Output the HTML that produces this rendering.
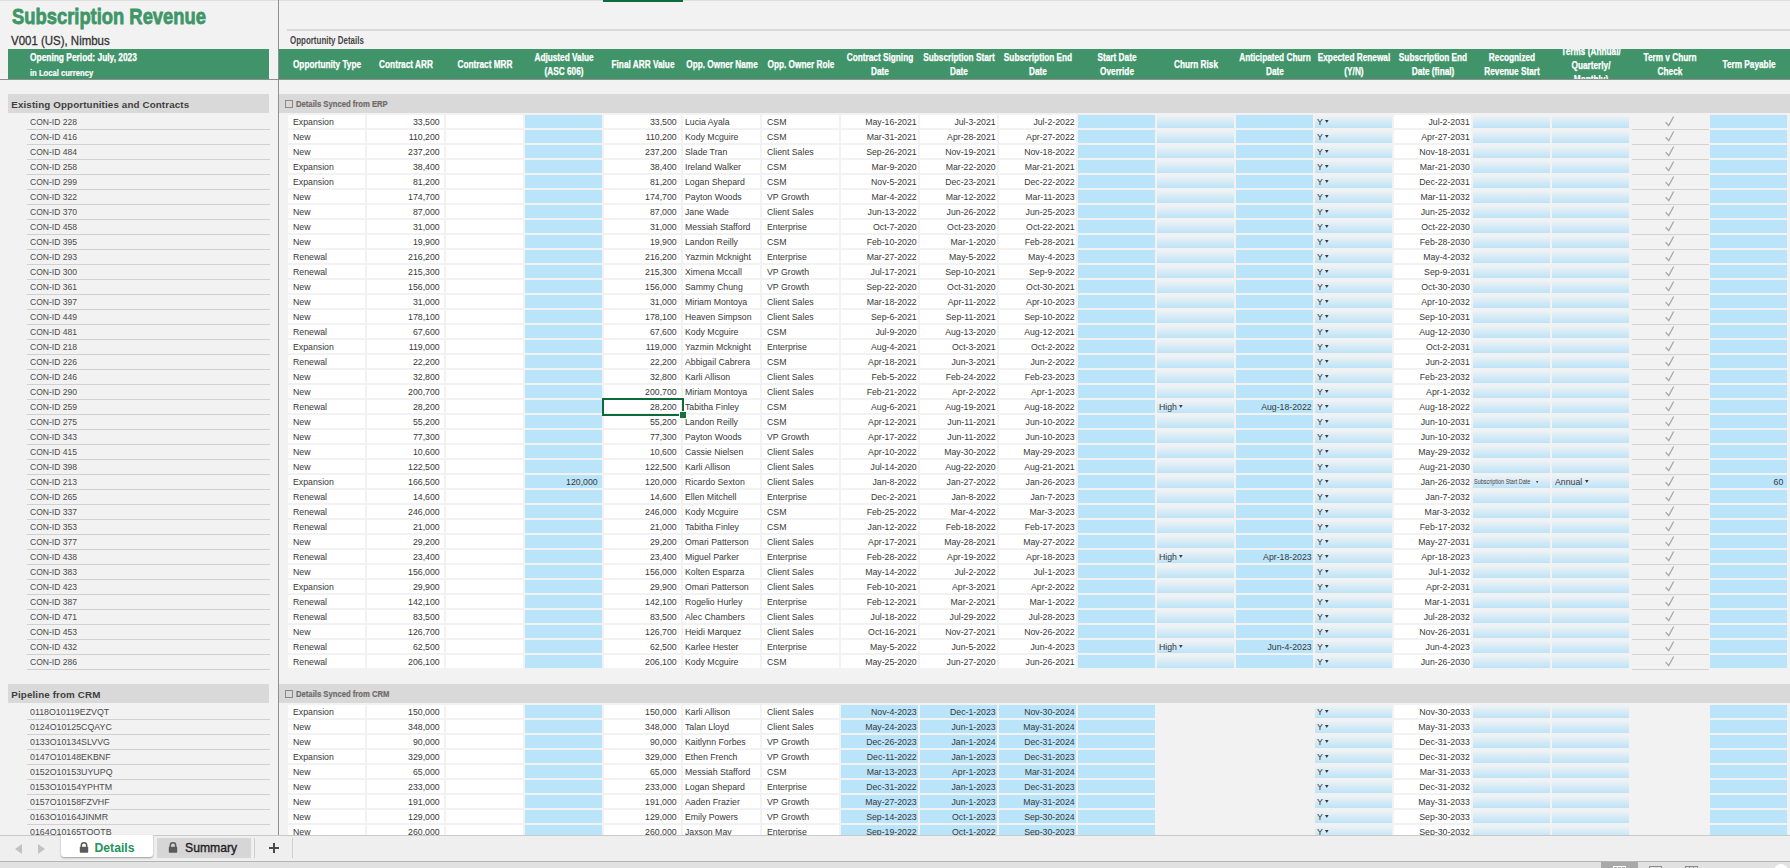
<!DOCTYPE html><html><head><meta charset="utf-8"><title>Subscription Revenue</title><style>
*{margin:0;padding:0;box-sizing:border-box}
html,body{width:1790px;height:868px;overflow:hidden;background:#f2f2f2;position:relative;font-family:"Liberation Sans",sans-serif}
.r{position:absolute}
.t{position:absolute;font-size:9.5px;line-height:13px;height:13px;color:#383838;white-space:nowrap;transform:scaleX(.92);transform-origin:0 0}
.t.rt{text-align:right;transform-origin:100% 0}
.lid{position:absolute;font-size:9.5px;line-height:13px;color:#4a4a4a;white-space:nowrap;transform:scaleX(.9);transform-origin:0 0}
.hd{position:absolute;color:#fff;font-weight:bold;font-size:10.2px;line-height:14px;-webkit-text-stroke:.25px #fff;white-space:nowrap;text-align:center;width:120px;transform:scaleX(.81);transform-origin:50% 0}
.arr{position:absolute;width:0;height:0;border-left:1.5px solid transparent;border-right:1.5px solid transparent;border-top:2.6px solid #333}
</style></head><body>
<div class="r" style="left:0.00px;top:0.00px;width:1790.00px;height:1.00px;background:#dedede;"></div>
<div class="r" style="left:603.00px;top:0.00px;width:80.00px;height:1.50px;background:#0e6a3a;"></div>
<div class="r" style="left:11.8px;top:1.6px;font-size:22px;line-height:30px;font-weight:bold;color:#3f9667;-webkit-text-stroke:.8px #3f9667;white-space:nowrap;transform:scaleX(.835);transform-origin:0 0">Subscription Revenue</div>
<div class="r" style="left:10.8px;top:32.8px;font-size:12.6px;line-height:16px;color:#333;-webkit-text-stroke:.3px #333;white-space:nowrap;transform:scaleX(.91);transform-origin:0 0">V001 (US), Nimbus</div>
<div class="r" style="left:8.00px;top:49.00px;width:261.00px;height:30.00px;background:#41946a;"></div>
<div class="r" style="left:30px;top:50.5px;font-size:10.1px;line-height:13px;font-weight:bold;color:#fff;-webkit-text-stroke:.25px #fff;white-space:nowrap;transform:scaleX(.83);transform-origin:0 0">Opening Period: July, 2023</div>
<div class="r" style="left:30px;top:66.5px;font-size:9.3px;line-height:13px;font-weight:bold;color:#fff;-webkit-text-stroke:.2px #fff;white-space:nowrap;transform:scaleX(.82);transform-origin:0 0">in Local currency</div>
<div class="r" style="left:287.00px;top:29.20px;width:1503.00px;height:1.80px;background:#d9d9d9;"></div>
<div class="r" style="left:290px;top:33.6px;font-size:10.5px;line-height:13px;font-weight:bold;color:#454545;white-space:nowrap;transform:scaleX(.758);transform-origin:0 0">Opportunity Details</div>
<div class="r" style="left:279.00px;top:49.00px;width:1511.00px;height:30.00px;background:#41946a;"></div>
<div class="hd" style="left:266.50px;top:57.5px">Opportunity Type</div>
<div class="hd" style="left:345.50px;top:57.5px">Contract ARR</div>
<div class="hd" style="left:424.50px;top:57.5px">Contract MRR</div>
<div class="hd" style="left:503.50px;top:50.5px">Adjusted Value<br>(ASC 606)</div>
<div class="hd" style="left:582.50px;top:57.5px">Final ARR Value</div>
<div class="hd" style="left:661.50px;top:57.5px">Opp. Owner Name</div>
<div class="hd" style="left:740.50px;top:57.5px">Opp. Owner Role</div>
<div class="hd" style="left:819.50px;top:50.5px">Contract Signing<br>Date</div>
<div class="hd" style="left:898.50px;top:50.5px">Subscription Start<br>Date</div>
<div class="hd" style="left:977.50px;top:50.5px">Subscription End<br>Date</div>
<div class="hd" style="left:1056.50px;top:50.5px">Start Date<br>Override</div>
<div class="hd" style="left:1135.50px;top:57.5px">Churn Risk</div>
<div class="hd" style="left:1214.50px;top:50.5px">Anticipated Churn<br>Date</div>
<div class="hd" style="left:1293.50px;top:50.5px">Expected Renewal<br>(Y/N)</div>
<div class="hd" style="left:1372.50px;top:50.5px">Subscription End<br>Date (final)</div>
<div class="hd" style="left:1451.50px;top:50.5px">Recognized<br>Revenue Start</div>
<div class="r" style="left:1552.00px;top:49px;width:77.0px;height:30px;overflow:hidden"><div class="hd" style="left:-21.50px;top:-4.5px;line-height:14px">Terms (Annual/<br>Quarterly/<br>Monthly)</div></div>
<div class="hd" style="left:1609.50px;top:50.5px">Term v Churn<br>Check</div>
<div class="hd" style="left:1688.50px;top:57.5px">Term Payable</div>
<div class="r" style="left:0.00px;top:79.00px;width:1790.00px;height:1.00px;background:#8f8f8f;"></div>
<div class="r" style="left:278.00px;top:0.00px;width:1.00px;height:835.00px;background:#8f8f8f;"></div>
<div class="r" style="left:8.00px;top:94.00px;width:261.00px;height:19.00px;background:#d9d9d9;"></div>
<div class="r" style="left:279.00px;top:94.00px;width:1511.00px;height:19.00px;background:#d9d9d9;"></div>
<div class="r" style="left:11.3px;top:98px;font-size:9.8px;line-height:13px;font-weight:bold;color:#3f3f3f;white-space:nowrap;letter-spacing:.12px">Existing Opportunities and Contracts</div>
<div class="r" style="left:285px;top:100px;width:8px;height:8px;border:1px solid #8a8a8a"></div>
<div class="r" style="left:296.3px;top:97.1px;font-size:9.6px;line-height:13px;font-weight:bold;color:#6f6b68;-webkit-text-stroke:.2px #6f6b68;white-space:nowrap;transform:scaleX(.8);transform-origin:0 0">Details Synced from ERP</div>
<div class="lid" style="left:30px;top:115px">CON-ID 228</div>
<div class="r" style="left:27.00px;top:129.00px;width:242.50px;height:1.00px;background:#d0d0d0;"></div>
<div class="r" style="left:288.00px;top:115px;width:77.0px;height:13.0px;background:#ffffff"></div>
<div class="r" style="left:367.00px;top:115px;width:77.0px;height:13.0px;background:#ffffff"></div>
<div class="r" style="left:446.00px;top:115px;width:77.0px;height:13.0px;background:#ffffff"></div>
<div class="r" style="left:604.00px;top:115px;width:77.0px;height:13.0px;background:#ffffff"></div>
<div class="r" style="left:683.00px;top:115px;width:77.0px;height:13.0px;background:#ffffff"></div>
<div class="r" style="left:762.00px;top:115px;width:77.0px;height:13.0px;background:#ffffff"></div>
<div class="r" style="left:841.00px;top:115px;width:77.0px;height:13.0px;background:#ffffff"></div>
<div class="r" style="left:920.00px;top:115px;width:77.0px;height:13.0px;background:#ffffff"></div>
<div class="r" style="left:999.00px;top:115px;width:77.0px;height:13.0px;background:#ffffff"></div>
<div class="r" style="left:1394.00px;top:115px;width:77.0px;height:13.0px;background:#ffffff"></div>
<div class="r" style="left:525.00px;top:115px;width:77.0px;height:13.0px;background:#b9e4fa"></div>
<div class="r" style="left:1078.00px;top:115px;width:77.0px;height:13.0px;background:#b9e4fa"></div>
<div class="r" style="left:1236.00px;top:115px;width:77.0px;height:13.0px;background:#b9e4fa"></div>
<div class="r" style="left:1710.00px;top:115px;width:77.0px;height:13.0px;background:#b9e4fa"></div>
<div class="r" style="left:1157.00px;top:115px;width:77.0px;height:13.0px;background:linear-gradient(#f1f3f4,#bde3f8)"></div>
<div class="r" style="left:1315.00px;top:115px;width:77.0px;height:13.0px;background:linear-gradient(#f1f3f4,#bde3f8)"></div>
<div class="r" style="left:1473.00px;top:115px;width:77.0px;height:13.0px;background:linear-gradient(#f1f3f4,#bde3f8)"></div>
<div class="r" style="left:1552.00px;top:115px;width:77.0px;height:13.0px;background:linear-gradient(#f1f3f4,#bde3f8)"></div>
<div class="t" style="left:293.00px;top:115px">Expansion</div>
<div class="t rt" style="left:367.00px;top:115px;width:72.70px">33,500</div>
<div class="t rt" style="left:604.00px;top:115px;width:72.70px">33,500</div>
<div class="t" style="left:684.80px;top:115px">Lucia Ayala</div>
<div class="t" style="left:767.00px;top:115px">CSM</div>
<div class="t rt" style="left:841.00px;top:115px;width:75.70px">May-16-2021</div>
<div class="t rt" style="left:920.00px;top:115px;width:75.70px">Jul-3-2021</div>
<div class="t rt" style="left:999.00px;top:115px;width:75.70px">Jul-2-2022</div>
<div class="t" style="left:1317.40px;top:115px">Y</div>
<svg class="r" style="left:1325.40px;top:120.30px" width="4" height="3" viewBox="0 0 4 3"><polygon points="0,0 3.6,0 1.8,3" fill="#3a3a3a"/></svg>
<div class="t rt" style="left:1394.00px;top:115px;width:75.80px">Jul-2-2031</div>
<svg class="r" style="left:1664.35px;top:115.5px" width="12" height="12" viewBox="0 0 12 12"><path d="M1.65 6.3 L4.75 9.6 L9.65 0.5" fill="none" stroke="#a9a9a9" stroke-width="1.3"/></svg>
<div class="r" style="left:1631.50px;top:129px;width:77.00px;height:1px;background:#d2d2d2"></div>
<div class="lid" style="left:30px;top:130px">CON-ID 416</div>
<div class="r" style="left:27.00px;top:144.00px;width:242.50px;height:1.00px;background:#d0d0d0;"></div>
<div class="r" style="left:288.00px;top:130px;width:77.0px;height:13.0px;background:#ffffff"></div>
<div class="r" style="left:367.00px;top:130px;width:77.0px;height:13.0px;background:#ffffff"></div>
<div class="r" style="left:446.00px;top:130px;width:77.0px;height:13.0px;background:#ffffff"></div>
<div class="r" style="left:604.00px;top:130px;width:77.0px;height:13.0px;background:#ffffff"></div>
<div class="r" style="left:683.00px;top:130px;width:77.0px;height:13.0px;background:#ffffff"></div>
<div class="r" style="left:762.00px;top:130px;width:77.0px;height:13.0px;background:#ffffff"></div>
<div class="r" style="left:841.00px;top:130px;width:77.0px;height:13.0px;background:#ffffff"></div>
<div class="r" style="left:920.00px;top:130px;width:77.0px;height:13.0px;background:#ffffff"></div>
<div class="r" style="left:999.00px;top:130px;width:77.0px;height:13.0px;background:#ffffff"></div>
<div class="r" style="left:1394.00px;top:130px;width:77.0px;height:13.0px;background:#ffffff"></div>
<div class="r" style="left:525.00px;top:130px;width:77.0px;height:13.0px;background:#b9e4fa"></div>
<div class="r" style="left:1078.00px;top:130px;width:77.0px;height:13.0px;background:#b9e4fa"></div>
<div class="r" style="left:1236.00px;top:130px;width:77.0px;height:13.0px;background:#b9e4fa"></div>
<div class="r" style="left:1710.00px;top:130px;width:77.0px;height:13.0px;background:#b9e4fa"></div>
<div class="r" style="left:1157.00px;top:130px;width:77.0px;height:13.0px;background:linear-gradient(#f1f3f4,#bde3f8)"></div>
<div class="r" style="left:1315.00px;top:130px;width:77.0px;height:13.0px;background:linear-gradient(#f1f3f4,#bde3f8)"></div>
<div class="r" style="left:1473.00px;top:130px;width:77.0px;height:13.0px;background:linear-gradient(#f1f3f4,#bde3f8)"></div>
<div class="r" style="left:1552.00px;top:130px;width:77.0px;height:13.0px;background:linear-gradient(#f1f3f4,#bde3f8)"></div>
<div class="t" style="left:293.00px;top:130px">New</div>
<div class="t rt" style="left:367.00px;top:130px;width:72.70px">110,200</div>
<div class="t rt" style="left:604.00px;top:130px;width:72.70px">110,200</div>
<div class="t" style="left:684.80px;top:130px">Kody Mcguire</div>
<div class="t" style="left:767.00px;top:130px">CSM</div>
<div class="t rt" style="left:841.00px;top:130px;width:75.70px">Mar-31-2021</div>
<div class="t rt" style="left:920.00px;top:130px;width:75.70px">Apr-28-2021</div>
<div class="t rt" style="left:999.00px;top:130px;width:75.70px">Apr-27-2022</div>
<div class="t" style="left:1317.40px;top:130px">Y</div>
<svg class="r" style="left:1325.40px;top:135.30px" width="4" height="3" viewBox="0 0 4 3"><polygon points="0,0 3.6,0 1.8,3" fill="#3a3a3a"/></svg>
<div class="t rt" style="left:1394.00px;top:130px;width:75.80px">Apr-27-2031</div>
<svg class="r" style="left:1664.35px;top:130.5px" width="12" height="12" viewBox="0 0 12 12"><path d="M1.65 6.3 L4.75 9.6 L9.65 0.5" fill="none" stroke="#a9a9a9" stroke-width="1.3"/></svg>
<div class="r" style="left:1631.50px;top:144px;width:77.00px;height:1px;background:#d2d2d2"></div>
<div class="lid" style="left:30px;top:145px">CON-ID 484</div>
<div class="r" style="left:27.00px;top:159.00px;width:242.50px;height:1.00px;background:#d0d0d0;"></div>
<div class="r" style="left:288.00px;top:145px;width:77.0px;height:13.0px;background:#ffffff"></div>
<div class="r" style="left:367.00px;top:145px;width:77.0px;height:13.0px;background:#ffffff"></div>
<div class="r" style="left:446.00px;top:145px;width:77.0px;height:13.0px;background:#ffffff"></div>
<div class="r" style="left:604.00px;top:145px;width:77.0px;height:13.0px;background:#ffffff"></div>
<div class="r" style="left:683.00px;top:145px;width:77.0px;height:13.0px;background:#ffffff"></div>
<div class="r" style="left:762.00px;top:145px;width:77.0px;height:13.0px;background:#ffffff"></div>
<div class="r" style="left:841.00px;top:145px;width:77.0px;height:13.0px;background:#ffffff"></div>
<div class="r" style="left:920.00px;top:145px;width:77.0px;height:13.0px;background:#ffffff"></div>
<div class="r" style="left:999.00px;top:145px;width:77.0px;height:13.0px;background:#ffffff"></div>
<div class="r" style="left:1394.00px;top:145px;width:77.0px;height:13.0px;background:#ffffff"></div>
<div class="r" style="left:525.00px;top:145px;width:77.0px;height:13.0px;background:#b9e4fa"></div>
<div class="r" style="left:1078.00px;top:145px;width:77.0px;height:13.0px;background:#b9e4fa"></div>
<div class="r" style="left:1236.00px;top:145px;width:77.0px;height:13.0px;background:#b9e4fa"></div>
<div class="r" style="left:1710.00px;top:145px;width:77.0px;height:13.0px;background:#b9e4fa"></div>
<div class="r" style="left:1157.00px;top:145px;width:77.0px;height:13.0px;background:linear-gradient(#f1f3f4,#bde3f8)"></div>
<div class="r" style="left:1315.00px;top:145px;width:77.0px;height:13.0px;background:linear-gradient(#f1f3f4,#bde3f8)"></div>
<div class="r" style="left:1473.00px;top:145px;width:77.0px;height:13.0px;background:linear-gradient(#f1f3f4,#bde3f8)"></div>
<div class="r" style="left:1552.00px;top:145px;width:77.0px;height:13.0px;background:linear-gradient(#f1f3f4,#bde3f8)"></div>
<div class="t" style="left:293.00px;top:145px">New</div>
<div class="t rt" style="left:367.00px;top:145px;width:72.70px">237,200</div>
<div class="t rt" style="left:604.00px;top:145px;width:72.70px">237,200</div>
<div class="t" style="left:684.80px;top:145px">Slade Tran</div>
<div class="t" style="left:767.00px;top:145px">Client Sales</div>
<div class="t rt" style="left:841.00px;top:145px;width:75.70px">Sep-26-2021</div>
<div class="t rt" style="left:920.00px;top:145px;width:75.70px">Nov-19-2021</div>
<div class="t rt" style="left:999.00px;top:145px;width:75.70px">Nov-18-2022</div>
<div class="t" style="left:1317.40px;top:145px">Y</div>
<svg class="r" style="left:1325.40px;top:150.30px" width="4" height="3" viewBox="0 0 4 3"><polygon points="0,0 3.6,0 1.8,3" fill="#3a3a3a"/></svg>
<div class="t rt" style="left:1394.00px;top:145px;width:75.80px">Nov-18-2031</div>
<svg class="r" style="left:1664.35px;top:145.5px" width="12" height="12" viewBox="0 0 12 12"><path d="M1.65 6.3 L4.75 9.6 L9.65 0.5" fill="none" stroke="#a9a9a9" stroke-width="1.3"/></svg>
<div class="r" style="left:1631.50px;top:159px;width:77.00px;height:1px;background:#d2d2d2"></div>
<div class="lid" style="left:30px;top:160px">CON-ID 258</div>
<div class="r" style="left:27.00px;top:174.00px;width:242.50px;height:1.00px;background:#d0d0d0;"></div>
<div class="r" style="left:288.00px;top:160px;width:77.0px;height:13.0px;background:#ffffff"></div>
<div class="r" style="left:367.00px;top:160px;width:77.0px;height:13.0px;background:#ffffff"></div>
<div class="r" style="left:446.00px;top:160px;width:77.0px;height:13.0px;background:#ffffff"></div>
<div class="r" style="left:604.00px;top:160px;width:77.0px;height:13.0px;background:#ffffff"></div>
<div class="r" style="left:683.00px;top:160px;width:77.0px;height:13.0px;background:#ffffff"></div>
<div class="r" style="left:762.00px;top:160px;width:77.0px;height:13.0px;background:#ffffff"></div>
<div class="r" style="left:841.00px;top:160px;width:77.0px;height:13.0px;background:#ffffff"></div>
<div class="r" style="left:920.00px;top:160px;width:77.0px;height:13.0px;background:#ffffff"></div>
<div class="r" style="left:999.00px;top:160px;width:77.0px;height:13.0px;background:#ffffff"></div>
<div class="r" style="left:1394.00px;top:160px;width:77.0px;height:13.0px;background:#ffffff"></div>
<div class="r" style="left:525.00px;top:160px;width:77.0px;height:13.0px;background:#b9e4fa"></div>
<div class="r" style="left:1078.00px;top:160px;width:77.0px;height:13.0px;background:#b9e4fa"></div>
<div class="r" style="left:1236.00px;top:160px;width:77.0px;height:13.0px;background:#b9e4fa"></div>
<div class="r" style="left:1710.00px;top:160px;width:77.0px;height:13.0px;background:#b9e4fa"></div>
<div class="r" style="left:1157.00px;top:160px;width:77.0px;height:13.0px;background:linear-gradient(#f1f3f4,#bde3f8)"></div>
<div class="r" style="left:1315.00px;top:160px;width:77.0px;height:13.0px;background:linear-gradient(#f1f3f4,#bde3f8)"></div>
<div class="r" style="left:1473.00px;top:160px;width:77.0px;height:13.0px;background:linear-gradient(#f1f3f4,#bde3f8)"></div>
<div class="r" style="left:1552.00px;top:160px;width:77.0px;height:13.0px;background:linear-gradient(#f1f3f4,#bde3f8)"></div>
<div class="t" style="left:293.00px;top:160px">Expansion</div>
<div class="t rt" style="left:367.00px;top:160px;width:72.70px">38,400</div>
<div class="t rt" style="left:604.00px;top:160px;width:72.70px">38,400</div>
<div class="t" style="left:684.80px;top:160px">Ireland Walker</div>
<div class="t" style="left:767.00px;top:160px">CSM</div>
<div class="t rt" style="left:841.00px;top:160px;width:75.70px">Mar-9-2020</div>
<div class="t rt" style="left:920.00px;top:160px;width:75.70px">Mar-22-2020</div>
<div class="t rt" style="left:999.00px;top:160px;width:75.70px">Mar-21-2021</div>
<div class="t" style="left:1317.40px;top:160px">Y</div>
<svg class="r" style="left:1325.40px;top:165.30px" width="4" height="3" viewBox="0 0 4 3"><polygon points="0,0 3.6,0 1.8,3" fill="#3a3a3a"/></svg>
<div class="t rt" style="left:1394.00px;top:160px;width:75.80px">Mar-21-2030</div>
<svg class="r" style="left:1664.35px;top:160.5px" width="12" height="12" viewBox="0 0 12 12"><path d="M1.65 6.3 L4.75 9.6 L9.65 0.5" fill="none" stroke="#a9a9a9" stroke-width="1.3"/></svg>
<div class="r" style="left:1631.50px;top:174px;width:77.00px;height:1px;background:#d2d2d2"></div>
<div class="lid" style="left:30px;top:175px">CON-ID 299</div>
<div class="r" style="left:27.00px;top:189.00px;width:242.50px;height:1.00px;background:#d0d0d0;"></div>
<div class="r" style="left:288.00px;top:175px;width:77.0px;height:13.0px;background:#ffffff"></div>
<div class="r" style="left:367.00px;top:175px;width:77.0px;height:13.0px;background:#ffffff"></div>
<div class="r" style="left:446.00px;top:175px;width:77.0px;height:13.0px;background:#ffffff"></div>
<div class="r" style="left:604.00px;top:175px;width:77.0px;height:13.0px;background:#ffffff"></div>
<div class="r" style="left:683.00px;top:175px;width:77.0px;height:13.0px;background:#ffffff"></div>
<div class="r" style="left:762.00px;top:175px;width:77.0px;height:13.0px;background:#ffffff"></div>
<div class="r" style="left:841.00px;top:175px;width:77.0px;height:13.0px;background:#ffffff"></div>
<div class="r" style="left:920.00px;top:175px;width:77.0px;height:13.0px;background:#ffffff"></div>
<div class="r" style="left:999.00px;top:175px;width:77.0px;height:13.0px;background:#ffffff"></div>
<div class="r" style="left:1394.00px;top:175px;width:77.0px;height:13.0px;background:#ffffff"></div>
<div class="r" style="left:525.00px;top:175px;width:77.0px;height:13.0px;background:#b9e4fa"></div>
<div class="r" style="left:1078.00px;top:175px;width:77.0px;height:13.0px;background:#b9e4fa"></div>
<div class="r" style="left:1236.00px;top:175px;width:77.0px;height:13.0px;background:#b9e4fa"></div>
<div class="r" style="left:1710.00px;top:175px;width:77.0px;height:13.0px;background:#b9e4fa"></div>
<div class="r" style="left:1157.00px;top:175px;width:77.0px;height:13.0px;background:linear-gradient(#f1f3f4,#bde3f8)"></div>
<div class="r" style="left:1315.00px;top:175px;width:77.0px;height:13.0px;background:linear-gradient(#f1f3f4,#bde3f8)"></div>
<div class="r" style="left:1473.00px;top:175px;width:77.0px;height:13.0px;background:linear-gradient(#f1f3f4,#bde3f8)"></div>
<div class="r" style="left:1552.00px;top:175px;width:77.0px;height:13.0px;background:linear-gradient(#f1f3f4,#bde3f8)"></div>
<div class="t" style="left:293.00px;top:175px">Expansion</div>
<div class="t rt" style="left:367.00px;top:175px;width:72.70px">81,200</div>
<div class="t rt" style="left:604.00px;top:175px;width:72.70px">81,200</div>
<div class="t" style="left:684.80px;top:175px">Logan Shepard</div>
<div class="t" style="left:767.00px;top:175px">CSM</div>
<div class="t rt" style="left:841.00px;top:175px;width:75.70px">Nov-5-2021</div>
<div class="t rt" style="left:920.00px;top:175px;width:75.70px">Dec-23-2021</div>
<div class="t rt" style="left:999.00px;top:175px;width:75.70px">Dec-22-2022</div>
<div class="t" style="left:1317.40px;top:175px">Y</div>
<svg class="r" style="left:1325.40px;top:180.30px" width="4" height="3" viewBox="0 0 4 3"><polygon points="0,0 3.6,0 1.8,3" fill="#3a3a3a"/></svg>
<div class="t rt" style="left:1394.00px;top:175px;width:75.80px">Dec-22-2031</div>
<svg class="r" style="left:1664.35px;top:175.5px" width="12" height="12" viewBox="0 0 12 12"><path d="M1.65 6.3 L4.75 9.6 L9.65 0.5" fill="none" stroke="#a9a9a9" stroke-width="1.3"/></svg>
<div class="r" style="left:1631.50px;top:189px;width:77.00px;height:1px;background:#d2d2d2"></div>
<div class="lid" style="left:30px;top:190px">CON-ID 322</div>
<div class="r" style="left:27.00px;top:204.00px;width:242.50px;height:1.00px;background:#d0d0d0;"></div>
<div class="r" style="left:288.00px;top:190px;width:77.0px;height:13.0px;background:#ffffff"></div>
<div class="r" style="left:367.00px;top:190px;width:77.0px;height:13.0px;background:#ffffff"></div>
<div class="r" style="left:446.00px;top:190px;width:77.0px;height:13.0px;background:#ffffff"></div>
<div class="r" style="left:604.00px;top:190px;width:77.0px;height:13.0px;background:#ffffff"></div>
<div class="r" style="left:683.00px;top:190px;width:77.0px;height:13.0px;background:#ffffff"></div>
<div class="r" style="left:762.00px;top:190px;width:77.0px;height:13.0px;background:#ffffff"></div>
<div class="r" style="left:841.00px;top:190px;width:77.0px;height:13.0px;background:#ffffff"></div>
<div class="r" style="left:920.00px;top:190px;width:77.0px;height:13.0px;background:#ffffff"></div>
<div class="r" style="left:999.00px;top:190px;width:77.0px;height:13.0px;background:#ffffff"></div>
<div class="r" style="left:1394.00px;top:190px;width:77.0px;height:13.0px;background:#ffffff"></div>
<div class="r" style="left:525.00px;top:190px;width:77.0px;height:13.0px;background:#b9e4fa"></div>
<div class="r" style="left:1078.00px;top:190px;width:77.0px;height:13.0px;background:#b9e4fa"></div>
<div class="r" style="left:1236.00px;top:190px;width:77.0px;height:13.0px;background:#b9e4fa"></div>
<div class="r" style="left:1710.00px;top:190px;width:77.0px;height:13.0px;background:#b9e4fa"></div>
<div class="r" style="left:1157.00px;top:190px;width:77.0px;height:13.0px;background:linear-gradient(#f1f3f4,#bde3f8)"></div>
<div class="r" style="left:1315.00px;top:190px;width:77.0px;height:13.0px;background:linear-gradient(#f1f3f4,#bde3f8)"></div>
<div class="r" style="left:1473.00px;top:190px;width:77.0px;height:13.0px;background:linear-gradient(#f1f3f4,#bde3f8)"></div>
<div class="r" style="left:1552.00px;top:190px;width:77.0px;height:13.0px;background:linear-gradient(#f1f3f4,#bde3f8)"></div>
<div class="t" style="left:293.00px;top:190px">New</div>
<div class="t rt" style="left:367.00px;top:190px;width:72.70px">174,700</div>
<div class="t rt" style="left:604.00px;top:190px;width:72.70px">174,700</div>
<div class="t" style="left:684.80px;top:190px">Payton Woods</div>
<div class="t" style="left:767.00px;top:190px">VP Growth</div>
<div class="t rt" style="left:841.00px;top:190px;width:75.70px">Mar-4-2022</div>
<div class="t rt" style="left:920.00px;top:190px;width:75.70px">Mar-12-2022</div>
<div class="t rt" style="left:999.00px;top:190px;width:75.70px">Mar-11-2023</div>
<div class="t" style="left:1317.40px;top:190px">Y</div>
<svg class="r" style="left:1325.40px;top:195.30px" width="4" height="3" viewBox="0 0 4 3"><polygon points="0,0 3.6,0 1.8,3" fill="#3a3a3a"/></svg>
<div class="t rt" style="left:1394.00px;top:190px;width:75.80px">Mar-11-2032</div>
<svg class="r" style="left:1664.35px;top:190.5px" width="12" height="12" viewBox="0 0 12 12"><path d="M1.65 6.3 L4.75 9.6 L9.65 0.5" fill="none" stroke="#a9a9a9" stroke-width="1.3"/></svg>
<div class="r" style="left:1631.50px;top:204px;width:77.00px;height:1px;background:#d2d2d2"></div>
<div class="lid" style="left:30px;top:205px">CON-ID 370</div>
<div class="r" style="left:27.00px;top:219.00px;width:242.50px;height:1.00px;background:#d0d0d0;"></div>
<div class="r" style="left:288.00px;top:205px;width:77.0px;height:13.0px;background:#ffffff"></div>
<div class="r" style="left:367.00px;top:205px;width:77.0px;height:13.0px;background:#ffffff"></div>
<div class="r" style="left:446.00px;top:205px;width:77.0px;height:13.0px;background:#ffffff"></div>
<div class="r" style="left:604.00px;top:205px;width:77.0px;height:13.0px;background:#ffffff"></div>
<div class="r" style="left:683.00px;top:205px;width:77.0px;height:13.0px;background:#ffffff"></div>
<div class="r" style="left:762.00px;top:205px;width:77.0px;height:13.0px;background:#ffffff"></div>
<div class="r" style="left:841.00px;top:205px;width:77.0px;height:13.0px;background:#ffffff"></div>
<div class="r" style="left:920.00px;top:205px;width:77.0px;height:13.0px;background:#ffffff"></div>
<div class="r" style="left:999.00px;top:205px;width:77.0px;height:13.0px;background:#ffffff"></div>
<div class="r" style="left:1394.00px;top:205px;width:77.0px;height:13.0px;background:#ffffff"></div>
<div class="r" style="left:525.00px;top:205px;width:77.0px;height:13.0px;background:#b9e4fa"></div>
<div class="r" style="left:1078.00px;top:205px;width:77.0px;height:13.0px;background:#b9e4fa"></div>
<div class="r" style="left:1236.00px;top:205px;width:77.0px;height:13.0px;background:#b9e4fa"></div>
<div class="r" style="left:1710.00px;top:205px;width:77.0px;height:13.0px;background:#b9e4fa"></div>
<div class="r" style="left:1157.00px;top:205px;width:77.0px;height:13.0px;background:linear-gradient(#f1f3f4,#bde3f8)"></div>
<div class="r" style="left:1315.00px;top:205px;width:77.0px;height:13.0px;background:linear-gradient(#f1f3f4,#bde3f8)"></div>
<div class="r" style="left:1473.00px;top:205px;width:77.0px;height:13.0px;background:linear-gradient(#f1f3f4,#bde3f8)"></div>
<div class="r" style="left:1552.00px;top:205px;width:77.0px;height:13.0px;background:linear-gradient(#f1f3f4,#bde3f8)"></div>
<div class="t" style="left:293.00px;top:205px">New</div>
<div class="t rt" style="left:367.00px;top:205px;width:72.70px">87,000</div>
<div class="t rt" style="left:604.00px;top:205px;width:72.70px">87,000</div>
<div class="t" style="left:684.80px;top:205px">Jane Wade</div>
<div class="t" style="left:767.00px;top:205px">Client Sales</div>
<div class="t rt" style="left:841.00px;top:205px;width:75.70px">Jun-13-2022</div>
<div class="t rt" style="left:920.00px;top:205px;width:75.70px">Jun-26-2022</div>
<div class="t rt" style="left:999.00px;top:205px;width:75.70px">Jun-25-2023</div>
<div class="t" style="left:1317.40px;top:205px">Y</div>
<svg class="r" style="left:1325.40px;top:210.30px" width="4" height="3" viewBox="0 0 4 3"><polygon points="0,0 3.6,0 1.8,3" fill="#3a3a3a"/></svg>
<div class="t rt" style="left:1394.00px;top:205px;width:75.80px">Jun-25-2032</div>
<svg class="r" style="left:1664.35px;top:205.5px" width="12" height="12" viewBox="0 0 12 12"><path d="M1.65 6.3 L4.75 9.6 L9.65 0.5" fill="none" stroke="#a9a9a9" stroke-width="1.3"/></svg>
<div class="r" style="left:1631.50px;top:219px;width:77.00px;height:1px;background:#d2d2d2"></div>
<div class="lid" style="left:30px;top:220px">CON-ID 458</div>
<div class="r" style="left:27.00px;top:234.00px;width:242.50px;height:1.00px;background:#d0d0d0;"></div>
<div class="r" style="left:288.00px;top:220px;width:77.0px;height:13.0px;background:#ffffff"></div>
<div class="r" style="left:367.00px;top:220px;width:77.0px;height:13.0px;background:#ffffff"></div>
<div class="r" style="left:446.00px;top:220px;width:77.0px;height:13.0px;background:#ffffff"></div>
<div class="r" style="left:604.00px;top:220px;width:77.0px;height:13.0px;background:#ffffff"></div>
<div class="r" style="left:683.00px;top:220px;width:77.0px;height:13.0px;background:#ffffff"></div>
<div class="r" style="left:762.00px;top:220px;width:77.0px;height:13.0px;background:#ffffff"></div>
<div class="r" style="left:841.00px;top:220px;width:77.0px;height:13.0px;background:#ffffff"></div>
<div class="r" style="left:920.00px;top:220px;width:77.0px;height:13.0px;background:#ffffff"></div>
<div class="r" style="left:999.00px;top:220px;width:77.0px;height:13.0px;background:#ffffff"></div>
<div class="r" style="left:1394.00px;top:220px;width:77.0px;height:13.0px;background:#ffffff"></div>
<div class="r" style="left:525.00px;top:220px;width:77.0px;height:13.0px;background:#b9e4fa"></div>
<div class="r" style="left:1078.00px;top:220px;width:77.0px;height:13.0px;background:#b9e4fa"></div>
<div class="r" style="left:1236.00px;top:220px;width:77.0px;height:13.0px;background:#b9e4fa"></div>
<div class="r" style="left:1710.00px;top:220px;width:77.0px;height:13.0px;background:#b9e4fa"></div>
<div class="r" style="left:1157.00px;top:220px;width:77.0px;height:13.0px;background:linear-gradient(#f1f3f4,#bde3f8)"></div>
<div class="r" style="left:1315.00px;top:220px;width:77.0px;height:13.0px;background:linear-gradient(#f1f3f4,#bde3f8)"></div>
<div class="r" style="left:1473.00px;top:220px;width:77.0px;height:13.0px;background:linear-gradient(#f1f3f4,#bde3f8)"></div>
<div class="r" style="left:1552.00px;top:220px;width:77.0px;height:13.0px;background:linear-gradient(#f1f3f4,#bde3f8)"></div>
<div class="t" style="left:293.00px;top:220px">New</div>
<div class="t rt" style="left:367.00px;top:220px;width:72.70px">31,000</div>
<div class="t rt" style="left:604.00px;top:220px;width:72.70px">31,000</div>
<div class="t" style="left:684.80px;top:220px">Messiah Stafford</div>
<div class="t" style="left:767.00px;top:220px">Enterprise</div>
<div class="t rt" style="left:841.00px;top:220px;width:75.70px">Oct-7-2020</div>
<div class="t rt" style="left:920.00px;top:220px;width:75.70px">Oct-23-2020</div>
<div class="t rt" style="left:999.00px;top:220px;width:75.70px">Oct-22-2021</div>
<div class="t" style="left:1317.40px;top:220px">Y</div>
<svg class="r" style="left:1325.40px;top:225.30px" width="4" height="3" viewBox="0 0 4 3"><polygon points="0,0 3.6,0 1.8,3" fill="#3a3a3a"/></svg>
<div class="t rt" style="left:1394.00px;top:220px;width:75.80px">Oct-22-2030</div>
<svg class="r" style="left:1664.35px;top:220.5px" width="12" height="12" viewBox="0 0 12 12"><path d="M1.65 6.3 L4.75 9.6 L9.65 0.5" fill="none" stroke="#a9a9a9" stroke-width="1.3"/></svg>
<div class="r" style="left:1631.50px;top:234px;width:77.00px;height:1px;background:#d2d2d2"></div>
<div class="lid" style="left:30px;top:235px">CON-ID 395</div>
<div class="r" style="left:27.00px;top:249.00px;width:242.50px;height:1.00px;background:#d0d0d0;"></div>
<div class="r" style="left:288.00px;top:235px;width:77.0px;height:13.0px;background:#ffffff"></div>
<div class="r" style="left:367.00px;top:235px;width:77.0px;height:13.0px;background:#ffffff"></div>
<div class="r" style="left:446.00px;top:235px;width:77.0px;height:13.0px;background:#ffffff"></div>
<div class="r" style="left:604.00px;top:235px;width:77.0px;height:13.0px;background:#ffffff"></div>
<div class="r" style="left:683.00px;top:235px;width:77.0px;height:13.0px;background:#ffffff"></div>
<div class="r" style="left:762.00px;top:235px;width:77.0px;height:13.0px;background:#ffffff"></div>
<div class="r" style="left:841.00px;top:235px;width:77.0px;height:13.0px;background:#ffffff"></div>
<div class="r" style="left:920.00px;top:235px;width:77.0px;height:13.0px;background:#ffffff"></div>
<div class="r" style="left:999.00px;top:235px;width:77.0px;height:13.0px;background:#ffffff"></div>
<div class="r" style="left:1394.00px;top:235px;width:77.0px;height:13.0px;background:#ffffff"></div>
<div class="r" style="left:525.00px;top:235px;width:77.0px;height:13.0px;background:#b9e4fa"></div>
<div class="r" style="left:1078.00px;top:235px;width:77.0px;height:13.0px;background:#b9e4fa"></div>
<div class="r" style="left:1236.00px;top:235px;width:77.0px;height:13.0px;background:#b9e4fa"></div>
<div class="r" style="left:1710.00px;top:235px;width:77.0px;height:13.0px;background:#b9e4fa"></div>
<div class="r" style="left:1157.00px;top:235px;width:77.0px;height:13.0px;background:linear-gradient(#f1f3f4,#bde3f8)"></div>
<div class="r" style="left:1315.00px;top:235px;width:77.0px;height:13.0px;background:linear-gradient(#f1f3f4,#bde3f8)"></div>
<div class="r" style="left:1473.00px;top:235px;width:77.0px;height:13.0px;background:linear-gradient(#f1f3f4,#bde3f8)"></div>
<div class="r" style="left:1552.00px;top:235px;width:77.0px;height:13.0px;background:linear-gradient(#f1f3f4,#bde3f8)"></div>
<div class="t" style="left:293.00px;top:235px">New</div>
<div class="t rt" style="left:367.00px;top:235px;width:72.70px">19,900</div>
<div class="t rt" style="left:604.00px;top:235px;width:72.70px">19,900</div>
<div class="t" style="left:684.80px;top:235px">Landon Reilly</div>
<div class="t" style="left:767.00px;top:235px">CSM</div>
<div class="t rt" style="left:841.00px;top:235px;width:75.70px">Feb-10-2020</div>
<div class="t rt" style="left:920.00px;top:235px;width:75.70px">Mar-1-2020</div>
<div class="t rt" style="left:999.00px;top:235px;width:75.70px">Feb-28-2021</div>
<div class="t" style="left:1317.40px;top:235px">Y</div>
<svg class="r" style="left:1325.40px;top:240.30px" width="4" height="3" viewBox="0 0 4 3"><polygon points="0,0 3.6,0 1.8,3" fill="#3a3a3a"/></svg>
<div class="t rt" style="left:1394.00px;top:235px;width:75.80px">Feb-28-2030</div>
<svg class="r" style="left:1664.35px;top:235.5px" width="12" height="12" viewBox="0 0 12 12"><path d="M1.65 6.3 L4.75 9.6 L9.65 0.5" fill="none" stroke="#a9a9a9" stroke-width="1.3"/></svg>
<div class="r" style="left:1631.50px;top:249px;width:77.00px;height:1px;background:#d2d2d2"></div>
<div class="lid" style="left:30px;top:250px">CON-ID 293</div>
<div class="r" style="left:27.00px;top:264.00px;width:242.50px;height:1.00px;background:#d0d0d0;"></div>
<div class="r" style="left:288.00px;top:250px;width:77.0px;height:13.0px;background:#ffffff"></div>
<div class="r" style="left:367.00px;top:250px;width:77.0px;height:13.0px;background:#ffffff"></div>
<div class="r" style="left:446.00px;top:250px;width:77.0px;height:13.0px;background:#ffffff"></div>
<div class="r" style="left:604.00px;top:250px;width:77.0px;height:13.0px;background:#ffffff"></div>
<div class="r" style="left:683.00px;top:250px;width:77.0px;height:13.0px;background:#ffffff"></div>
<div class="r" style="left:762.00px;top:250px;width:77.0px;height:13.0px;background:#ffffff"></div>
<div class="r" style="left:841.00px;top:250px;width:77.0px;height:13.0px;background:#ffffff"></div>
<div class="r" style="left:920.00px;top:250px;width:77.0px;height:13.0px;background:#ffffff"></div>
<div class="r" style="left:999.00px;top:250px;width:77.0px;height:13.0px;background:#ffffff"></div>
<div class="r" style="left:1394.00px;top:250px;width:77.0px;height:13.0px;background:#ffffff"></div>
<div class="r" style="left:525.00px;top:250px;width:77.0px;height:13.0px;background:#b9e4fa"></div>
<div class="r" style="left:1078.00px;top:250px;width:77.0px;height:13.0px;background:#b9e4fa"></div>
<div class="r" style="left:1236.00px;top:250px;width:77.0px;height:13.0px;background:#b9e4fa"></div>
<div class="r" style="left:1710.00px;top:250px;width:77.0px;height:13.0px;background:#b9e4fa"></div>
<div class="r" style="left:1157.00px;top:250px;width:77.0px;height:13.0px;background:linear-gradient(#f1f3f4,#bde3f8)"></div>
<div class="r" style="left:1315.00px;top:250px;width:77.0px;height:13.0px;background:linear-gradient(#f1f3f4,#bde3f8)"></div>
<div class="r" style="left:1473.00px;top:250px;width:77.0px;height:13.0px;background:linear-gradient(#f1f3f4,#bde3f8)"></div>
<div class="r" style="left:1552.00px;top:250px;width:77.0px;height:13.0px;background:linear-gradient(#f1f3f4,#bde3f8)"></div>
<div class="t" style="left:293.00px;top:250px">Renewal</div>
<div class="t rt" style="left:367.00px;top:250px;width:72.70px">216,200</div>
<div class="t rt" style="left:604.00px;top:250px;width:72.70px">216,200</div>
<div class="t" style="left:684.80px;top:250px">Yazmin Mcknight</div>
<div class="t" style="left:767.00px;top:250px">Enterprise</div>
<div class="t rt" style="left:841.00px;top:250px;width:75.70px">Mar-27-2022</div>
<div class="t rt" style="left:920.00px;top:250px;width:75.70px">May-5-2022</div>
<div class="t rt" style="left:999.00px;top:250px;width:75.70px">May-4-2023</div>
<div class="t" style="left:1317.40px;top:250px">Y</div>
<svg class="r" style="left:1325.40px;top:255.30px" width="4" height="3" viewBox="0 0 4 3"><polygon points="0,0 3.6,0 1.8,3" fill="#3a3a3a"/></svg>
<div class="t rt" style="left:1394.00px;top:250px;width:75.80px">May-4-2032</div>
<svg class="r" style="left:1664.35px;top:250.5px" width="12" height="12" viewBox="0 0 12 12"><path d="M1.65 6.3 L4.75 9.6 L9.65 0.5" fill="none" stroke="#a9a9a9" stroke-width="1.3"/></svg>
<div class="r" style="left:1631.50px;top:264px;width:77.00px;height:1px;background:#d2d2d2"></div>
<div class="lid" style="left:30px;top:265px">CON-ID 300</div>
<div class="r" style="left:27.00px;top:279.00px;width:242.50px;height:1.00px;background:#d0d0d0;"></div>
<div class="r" style="left:288.00px;top:265px;width:77.0px;height:13.0px;background:#ffffff"></div>
<div class="r" style="left:367.00px;top:265px;width:77.0px;height:13.0px;background:#ffffff"></div>
<div class="r" style="left:446.00px;top:265px;width:77.0px;height:13.0px;background:#ffffff"></div>
<div class="r" style="left:604.00px;top:265px;width:77.0px;height:13.0px;background:#ffffff"></div>
<div class="r" style="left:683.00px;top:265px;width:77.0px;height:13.0px;background:#ffffff"></div>
<div class="r" style="left:762.00px;top:265px;width:77.0px;height:13.0px;background:#ffffff"></div>
<div class="r" style="left:841.00px;top:265px;width:77.0px;height:13.0px;background:#ffffff"></div>
<div class="r" style="left:920.00px;top:265px;width:77.0px;height:13.0px;background:#ffffff"></div>
<div class="r" style="left:999.00px;top:265px;width:77.0px;height:13.0px;background:#ffffff"></div>
<div class="r" style="left:1394.00px;top:265px;width:77.0px;height:13.0px;background:#ffffff"></div>
<div class="r" style="left:525.00px;top:265px;width:77.0px;height:13.0px;background:#b9e4fa"></div>
<div class="r" style="left:1078.00px;top:265px;width:77.0px;height:13.0px;background:#b9e4fa"></div>
<div class="r" style="left:1236.00px;top:265px;width:77.0px;height:13.0px;background:#b9e4fa"></div>
<div class="r" style="left:1710.00px;top:265px;width:77.0px;height:13.0px;background:#b9e4fa"></div>
<div class="r" style="left:1157.00px;top:265px;width:77.0px;height:13.0px;background:linear-gradient(#f1f3f4,#bde3f8)"></div>
<div class="r" style="left:1315.00px;top:265px;width:77.0px;height:13.0px;background:linear-gradient(#f1f3f4,#bde3f8)"></div>
<div class="r" style="left:1473.00px;top:265px;width:77.0px;height:13.0px;background:linear-gradient(#f1f3f4,#bde3f8)"></div>
<div class="r" style="left:1552.00px;top:265px;width:77.0px;height:13.0px;background:linear-gradient(#f1f3f4,#bde3f8)"></div>
<div class="t" style="left:293.00px;top:265px">Renewal</div>
<div class="t rt" style="left:367.00px;top:265px;width:72.70px">215,300</div>
<div class="t rt" style="left:604.00px;top:265px;width:72.70px">215,300</div>
<div class="t" style="left:684.80px;top:265px">Ximena Mccall</div>
<div class="t" style="left:767.00px;top:265px">VP Growth</div>
<div class="t rt" style="left:841.00px;top:265px;width:75.70px">Jul-17-2021</div>
<div class="t rt" style="left:920.00px;top:265px;width:75.70px">Sep-10-2021</div>
<div class="t rt" style="left:999.00px;top:265px;width:75.70px">Sep-9-2022</div>
<div class="t" style="left:1317.40px;top:265px">Y</div>
<svg class="r" style="left:1325.40px;top:270.30px" width="4" height="3" viewBox="0 0 4 3"><polygon points="0,0 3.6,0 1.8,3" fill="#3a3a3a"/></svg>
<div class="t rt" style="left:1394.00px;top:265px;width:75.80px">Sep-9-2031</div>
<svg class="r" style="left:1664.35px;top:265.5px" width="12" height="12" viewBox="0 0 12 12"><path d="M1.65 6.3 L4.75 9.6 L9.65 0.5" fill="none" stroke="#a9a9a9" stroke-width="1.3"/></svg>
<div class="r" style="left:1631.50px;top:279px;width:77.00px;height:1px;background:#d2d2d2"></div>
<div class="lid" style="left:30px;top:280px">CON-ID 361</div>
<div class="r" style="left:27.00px;top:294.00px;width:242.50px;height:1.00px;background:#d0d0d0;"></div>
<div class="r" style="left:288.00px;top:280px;width:77.0px;height:13.0px;background:#ffffff"></div>
<div class="r" style="left:367.00px;top:280px;width:77.0px;height:13.0px;background:#ffffff"></div>
<div class="r" style="left:446.00px;top:280px;width:77.0px;height:13.0px;background:#ffffff"></div>
<div class="r" style="left:604.00px;top:280px;width:77.0px;height:13.0px;background:#ffffff"></div>
<div class="r" style="left:683.00px;top:280px;width:77.0px;height:13.0px;background:#ffffff"></div>
<div class="r" style="left:762.00px;top:280px;width:77.0px;height:13.0px;background:#ffffff"></div>
<div class="r" style="left:841.00px;top:280px;width:77.0px;height:13.0px;background:#ffffff"></div>
<div class="r" style="left:920.00px;top:280px;width:77.0px;height:13.0px;background:#ffffff"></div>
<div class="r" style="left:999.00px;top:280px;width:77.0px;height:13.0px;background:#ffffff"></div>
<div class="r" style="left:1394.00px;top:280px;width:77.0px;height:13.0px;background:#ffffff"></div>
<div class="r" style="left:525.00px;top:280px;width:77.0px;height:13.0px;background:#b9e4fa"></div>
<div class="r" style="left:1078.00px;top:280px;width:77.0px;height:13.0px;background:#b9e4fa"></div>
<div class="r" style="left:1236.00px;top:280px;width:77.0px;height:13.0px;background:#b9e4fa"></div>
<div class="r" style="left:1710.00px;top:280px;width:77.0px;height:13.0px;background:#b9e4fa"></div>
<div class="r" style="left:1157.00px;top:280px;width:77.0px;height:13.0px;background:linear-gradient(#f1f3f4,#bde3f8)"></div>
<div class="r" style="left:1315.00px;top:280px;width:77.0px;height:13.0px;background:linear-gradient(#f1f3f4,#bde3f8)"></div>
<div class="r" style="left:1473.00px;top:280px;width:77.0px;height:13.0px;background:linear-gradient(#f1f3f4,#bde3f8)"></div>
<div class="r" style="left:1552.00px;top:280px;width:77.0px;height:13.0px;background:linear-gradient(#f1f3f4,#bde3f8)"></div>
<div class="t" style="left:293.00px;top:280px">New</div>
<div class="t rt" style="left:367.00px;top:280px;width:72.70px">156,000</div>
<div class="t rt" style="left:604.00px;top:280px;width:72.70px">156,000</div>
<div class="t" style="left:684.80px;top:280px">Sammy Chung</div>
<div class="t" style="left:767.00px;top:280px">VP Growth</div>
<div class="t rt" style="left:841.00px;top:280px;width:75.70px">Sep-22-2020</div>
<div class="t rt" style="left:920.00px;top:280px;width:75.70px">Oct-31-2020</div>
<div class="t rt" style="left:999.00px;top:280px;width:75.70px">Oct-30-2021</div>
<div class="t" style="left:1317.40px;top:280px">Y</div>
<svg class="r" style="left:1325.40px;top:285.30px" width="4" height="3" viewBox="0 0 4 3"><polygon points="0,0 3.6,0 1.8,3" fill="#3a3a3a"/></svg>
<div class="t rt" style="left:1394.00px;top:280px;width:75.80px">Oct-30-2030</div>
<svg class="r" style="left:1664.35px;top:280.5px" width="12" height="12" viewBox="0 0 12 12"><path d="M1.65 6.3 L4.75 9.6 L9.65 0.5" fill="none" stroke="#a9a9a9" stroke-width="1.3"/></svg>
<div class="r" style="left:1631.50px;top:294px;width:77.00px;height:1px;background:#d2d2d2"></div>
<div class="lid" style="left:30px;top:295px">CON-ID 397</div>
<div class="r" style="left:27.00px;top:309.00px;width:242.50px;height:1.00px;background:#d0d0d0;"></div>
<div class="r" style="left:288.00px;top:295px;width:77.0px;height:13.0px;background:#ffffff"></div>
<div class="r" style="left:367.00px;top:295px;width:77.0px;height:13.0px;background:#ffffff"></div>
<div class="r" style="left:446.00px;top:295px;width:77.0px;height:13.0px;background:#ffffff"></div>
<div class="r" style="left:604.00px;top:295px;width:77.0px;height:13.0px;background:#ffffff"></div>
<div class="r" style="left:683.00px;top:295px;width:77.0px;height:13.0px;background:#ffffff"></div>
<div class="r" style="left:762.00px;top:295px;width:77.0px;height:13.0px;background:#ffffff"></div>
<div class="r" style="left:841.00px;top:295px;width:77.0px;height:13.0px;background:#ffffff"></div>
<div class="r" style="left:920.00px;top:295px;width:77.0px;height:13.0px;background:#ffffff"></div>
<div class="r" style="left:999.00px;top:295px;width:77.0px;height:13.0px;background:#ffffff"></div>
<div class="r" style="left:1394.00px;top:295px;width:77.0px;height:13.0px;background:#ffffff"></div>
<div class="r" style="left:525.00px;top:295px;width:77.0px;height:13.0px;background:#b9e4fa"></div>
<div class="r" style="left:1078.00px;top:295px;width:77.0px;height:13.0px;background:#b9e4fa"></div>
<div class="r" style="left:1236.00px;top:295px;width:77.0px;height:13.0px;background:#b9e4fa"></div>
<div class="r" style="left:1710.00px;top:295px;width:77.0px;height:13.0px;background:#b9e4fa"></div>
<div class="r" style="left:1157.00px;top:295px;width:77.0px;height:13.0px;background:linear-gradient(#f1f3f4,#bde3f8)"></div>
<div class="r" style="left:1315.00px;top:295px;width:77.0px;height:13.0px;background:linear-gradient(#f1f3f4,#bde3f8)"></div>
<div class="r" style="left:1473.00px;top:295px;width:77.0px;height:13.0px;background:linear-gradient(#f1f3f4,#bde3f8)"></div>
<div class="r" style="left:1552.00px;top:295px;width:77.0px;height:13.0px;background:linear-gradient(#f1f3f4,#bde3f8)"></div>
<div class="t" style="left:293.00px;top:295px">New</div>
<div class="t rt" style="left:367.00px;top:295px;width:72.70px">31,000</div>
<div class="t rt" style="left:604.00px;top:295px;width:72.70px">31,000</div>
<div class="t" style="left:684.80px;top:295px">Miriam Montoya</div>
<div class="t" style="left:767.00px;top:295px">Client Sales</div>
<div class="t rt" style="left:841.00px;top:295px;width:75.70px">Mar-18-2022</div>
<div class="t rt" style="left:920.00px;top:295px;width:75.70px">Apr-11-2022</div>
<div class="t rt" style="left:999.00px;top:295px;width:75.70px">Apr-10-2023</div>
<div class="t" style="left:1317.40px;top:295px">Y</div>
<svg class="r" style="left:1325.40px;top:300.30px" width="4" height="3" viewBox="0 0 4 3"><polygon points="0,0 3.6,0 1.8,3" fill="#3a3a3a"/></svg>
<div class="t rt" style="left:1394.00px;top:295px;width:75.80px">Apr-10-2032</div>
<svg class="r" style="left:1664.35px;top:295.5px" width="12" height="12" viewBox="0 0 12 12"><path d="M1.65 6.3 L4.75 9.6 L9.65 0.5" fill="none" stroke="#a9a9a9" stroke-width="1.3"/></svg>
<div class="r" style="left:1631.50px;top:309px;width:77.00px;height:1px;background:#d2d2d2"></div>
<div class="lid" style="left:30px;top:310px">CON-ID 449</div>
<div class="r" style="left:27.00px;top:324.00px;width:242.50px;height:1.00px;background:#d0d0d0;"></div>
<div class="r" style="left:288.00px;top:310px;width:77.0px;height:13.0px;background:#ffffff"></div>
<div class="r" style="left:367.00px;top:310px;width:77.0px;height:13.0px;background:#ffffff"></div>
<div class="r" style="left:446.00px;top:310px;width:77.0px;height:13.0px;background:#ffffff"></div>
<div class="r" style="left:604.00px;top:310px;width:77.0px;height:13.0px;background:#ffffff"></div>
<div class="r" style="left:683.00px;top:310px;width:77.0px;height:13.0px;background:#ffffff"></div>
<div class="r" style="left:762.00px;top:310px;width:77.0px;height:13.0px;background:#ffffff"></div>
<div class="r" style="left:841.00px;top:310px;width:77.0px;height:13.0px;background:#ffffff"></div>
<div class="r" style="left:920.00px;top:310px;width:77.0px;height:13.0px;background:#ffffff"></div>
<div class="r" style="left:999.00px;top:310px;width:77.0px;height:13.0px;background:#ffffff"></div>
<div class="r" style="left:1394.00px;top:310px;width:77.0px;height:13.0px;background:#ffffff"></div>
<div class="r" style="left:525.00px;top:310px;width:77.0px;height:13.0px;background:#b9e4fa"></div>
<div class="r" style="left:1078.00px;top:310px;width:77.0px;height:13.0px;background:#b9e4fa"></div>
<div class="r" style="left:1236.00px;top:310px;width:77.0px;height:13.0px;background:#b9e4fa"></div>
<div class="r" style="left:1710.00px;top:310px;width:77.0px;height:13.0px;background:#b9e4fa"></div>
<div class="r" style="left:1157.00px;top:310px;width:77.0px;height:13.0px;background:linear-gradient(#f1f3f4,#bde3f8)"></div>
<div class="r" style="left:1315.00px;top:310px;width:77.0px;height:13.0px;background:linear-gradient(#f1f3f4,#bde3f8)"></div>
<div class="r" style="left:1473.00px;top:310px;width:77.0px;height:13.0px;background:linear-gradient(#f1f3f4,#bde3f8)"></div>
<div class="r" style="left:1552.00px;top:310px;width:77.0px;height:13.0px;background:linear-gradient(#f1f3f4,#bde3f8)"></div>
<div class="t" style="left:293.00px;top:310px">New</div>
<div class="t rt" style="left:367.00px;top:310px;width:72.70px">178,100</div>
<div class="t rt" style="left:604.00px;top:310px;width:72.70px">178,100</div>
<div class="t" style="left:684.80px;top:310px">Heaven Simpson</div>
<div class="t" style="left:767.00px;top:310px">Client Sales</div>
<div class="t rt" style="left:841.00px;top:310px;width:75.70px">Sep-6-2021</div>
<div class="t rt" style="left:920.00px;top:310px;width:75.70px">Sep-11-2021</div>
<div class="t rt" style="left:999.00px;top:310px;width:75.70px">Sep-10-2022</div>
<div class="t" style="left:1317.40px;top:310px">Y</div>
<svg class="r" style="left:1325.40px;top:315.30px" width="4" height="3" viewBox="0 0 4 3"><polygon points="0,0 3.6,0 1.8,3" fill="#3a3a3a"/></svg>
<div class="t rt" style="left:1394.00px;top:310px;width:75.80px">Sep-10-2031</div>
<svg class="r" style="left:1664.35px;top:310.5px" width="12" height="12" viewBox="0 0 12 12"><path d="M1.65 6.3 L4.75 9.6 L9.65 0.5" fill="none" stroke="#a9a9a9" stroke-width="1.3"/></svg>
<div class="r" style="left:1631.50px;top:324px;width:77.00px;height:1px;background:#d2d2d2"></div>
<div class="lid" style="left:30px;top:325px">CON-ID 481</div>
<div class="r" style="left:27.00px;top:339.00px;width:242.50px;height:1.00px;background:#d0d0d0;"></div>
<div class="r" style="left:288.00px;top:325px;width:77.0px;height:13.0px;background:#ffffff"></div>
<div class="r" style="left:367.00px;top:325px;width:77.0px;height:13.0px;background:#ffffff"></div>
<div class="r" style="left:446.00px;top:325px;width:77.0px;height:13.0px;background:#ffffff"></div>
<div class="r" style="left:604.00px;top:325px;width:77.0px;height:13.0px;background:#ffffff"></div>
<div class="r" style="left:683.00px;top:325px;width:77.0px;height:13.0px;background:#ffffff"></div>
<div class="r" style="left:762.00px;top:325px;width:77.0px;height:13.0px;background:#ffffff"></div>
<div class="r" style="left:841.00px;top:325px;width:77.0px;height:13.0px;background:#ffffff"></div>
<div class="r" style="left:920.00px;top:325px;width:77.0px;height:13.0px;background:#ffffff"></div>
<div class="r" style="left:999.00px;top:325px;width:77.0px;height:13.0px;background:#ffffff"></div>
<div class="r" style="left:1394.00px;top:325px;width:77.0px;height:13.0px;background:#ffffff"></div>
<div class="r" style="left:525.00px;top:325px;width:77.0px;height:13.0px;background:#b9e4fa"></div>
<div class="r" style="left:1078.00px;top:325px;width:77.0px;height:13.0px;background:#b9e4fa"></div>
<div class="r" style="left:1236.00px;top:325px;width:77.0px;height:13.0px;background:#b9e4fa"></div>
<div class="r" style="left:1710.00px;top:325px;width:77.0px;height:13.0px;background:#b9e4fa"></div>
<div class="r" style="left:1157.00px;top:325px;width:77.0px;height:13.0px;background:linear-gradient(#f1f3f4,#bde3f8)"></div>
<div class="r" style="left:1315.00px;top:325px;width:77.0px;height:13.0px;background:linear-gradient(#f1f3f4,#bde3f8)"></div>
<div class="r" style="left:1473.00px;top:325px;width:77.0px;height:13.0px;background:linear-gradient(#f1f3f4,#bde3f8)"></div>
<div class="r" style="left:1552.00px;top:325px;width:77.0px;height:13.0px;background:linear-gradient(#f1f3f4,#bde3f8)"></div>
<div class="t" style="left:293.00px;top:325px">Renewal</div>
<div class="t rt" style="left:367.00px;top:325px;width:72.70px">67,600</div>
<div class="t rt" style="left:604.00px;top:325px;width:72.70px">67,600</div>
<div class="t" style="left:684.80px;top:325px">Kody Mcguire</div>
<div class="t" style="left:767.00px;top:325px">CSM</div>
<div class="t rt" style="left:841.00px;top:325px;width:75.70px">Jul-9-2020</div>
<div class="t rt" style="left:920.00px;top:325px;width:75.70px">Aug-13-2020</div>
<div class="t rt" style="left:999.00px;top:325px;width:75.70px">Aug-12-2021</div>
<div class="t" style="left:1317.40px;top:325px">Y</div>
<svg class="r" style="left:1325.40px;top:330.30px" width="4" height="3" viewBox="0 0 4 3"><polygon points="0,0 3.6,0 1.8,3" fill="#3a3a3a"/></svg>
<div class="t rt" style="left:1394.00px;top:325px;width:75.80px">Aug-12-2030</div>
<svg class="r" style="left:1664.35px;top:325.5px" width="12" height="12" viewBox="0 0 12 12"><path d="M1.65 6.3 L4.75 9.6 L9.65 0.5" fill="none" stroke="#a9a9a9" stroke-width="1.3"/></svg>
<div class="r" style="left:1631.50px;top:339px;width:77.00px;height:1px;background:#d2d2d2"></div>
<div class="lid" style="left:30px;top:340px">CON-ID 218</div>
<div class="r" style="left:27.00px;top:354.00px;width:242.50px;height:1.00px;background:#d0d0d0;"></div>
<div class="r" style="left:288.00px;top:340px;width:77.0px;height:13.0px;background:#ffffff"></div>
<div class="r" style="left:367.00px;top:340px;width:77.0px;height:13.0px;background:#ffffff"></div>
<div class="r" style="left:446.00px;top:340px;width:77.0px;height:13.0px;background:#ffffff"></div>
<div class="r" style="left:604.00px;top:340px;width:77.0px;height:13.0px;background:#ffffff"></div>
<div class="r" style="left:683.00px;top:340px;width:77.0px;height:13.0px;background:#ffffff"></div>
<div class="r" style="left:762.00px;top:340px;width:77.0px;height:13.0px;background:#ffffff"></div>
<div class="r" style="left:841.00px;top:340px;width:77.0px;height:13.0px;background:#ffffff"></div>
<div class="r" style="left:920.00px;top:340px;width:77.0px;height:13.0px;background:#ffffff"></div>
<div class="r" style="left:999.00px;top:340px;width:77.0px;height:13.0px;background:#ffffff"></div>
<div class="r" style="left:1394.00px;top:340px;width:77.0px;height:13.0px;background:#ffffff"></div>
<div class="r" style="left:525.00px;top:340px;width:77.0px;height:13.0px;background:#b9e4fa"></div>
<div class="r" style="left:1078.00px;top:340px;width:77.0px;height:13.0px;background:#b9e4fa"></div>
<div class="r" style="left:1236.00px;top:340px;width:77.0px;height:13.0px;background:#b9e4fa"></div>
<div class="r" style="left:1710.00px;top:340px;width:77.0px;height:13.0px;background:#b9e4fa"></div>
<div class="r" style="left:1157.00px;top:340px;width:77.0px;height:13.0px;background:linear-gradient(#f1f3f4,#bde3f8)"></div>
<div class="r" style="left:1315.00px;top:340px;width:77.0px;height:13.0px;background:linear-gradient(#f1f3f4,#bde3f8)"></div>
<div class="r" style="left:1473.00px;top:340px;width:77.0px;height:13.0px;background:linear-gradient(#f1f3f4,#bde3f8)"></div>
<div class="r" style="left:1552.00px;top:340px;width:77.0px;height:13.0px;background:linear-gradient(#f1f3f4,#bde3f8)"></div>
<div class="t" style="left:293.00px;top:340px">Expansion</div>
<div class="t rt" style="left:367.00px;top:340px;width:72.70px">119,000</div>
<div class="t rt" style="left:604.00px;top:340px;width:72.70px">119,000</div>
<div class="t" style="left:684.80px;top:340px">Yazmin Mcknight</div>
<div class="t" style="left:767.00px;top:340px">Enterprise</div>
<div class="t rt" style="left:841.00px;top:340px;width:75.70px">Aug-4-2021</div>
<div class="t rt" style="left:920.00px;top:340px;width:75.70px">Oct-3-2021</div>
<div class="t rt" style="left:999.00px;top:340px;width:75.70px">Oct-2-2022</div>
<div class="t" style="left:1317.40px;top:340px">Y</div>
<svg class="r" style="left:1325.40px;top:345.30px" width="4" height="3" viewBox="0 0 4 3"><polygon points="0,0 3.6,0 1.8,3" fill="#3a3a3a"/></svg>
<div class="t rt" style="left:1394.00px;top:340px;width:75.80px">Oct-2-2031</div>
<svg class="r" style="left:1664.35px;top:340.5px" width="12" height="12" viewBox="0 0 12 12"><path d="M1.65 6.3 L4.75 9.6 L9.65 0.5" fill="none" stroke="#a9a9a9" stroke-width="1.3"/></svg>
<div class="r" style="left:1631.50px;top:354px;width:77.00px;height:1px;background:#d2d2d2"></div>
<div class="lid" style="left:30px;top:355px">CON-ID 226</div>
<div class="r" style="left:27.00px;top:369.00px;width:242.50px;height:1.00px;background:#d0d0d0;"></div>
<div class="r" style="left:288.00px;top:355px;width:77.0px;height:13.0px;background:#ffffff"></div>
<div class="r" style="left:367.00px;top:355px;width:77.0px;height:13.0px;background:#ffffff"></div>
<div class="r" style="left:446.00px;top:355px;width:77.0px;height:13.0px;background:#ffffff"></div>
<div class="r" style="left:604.00px;top:355px;width:77.0px;height:13.0px;background:#ffffff"></div>
<div class="r" style="left:683.00px;top:355px;width:77.0px;height:13.0px;background:#ffffff"></div>
<div class="r" style="left:762.00px;top:355px;width:77.0px;height:13.0px;background:#ffffff"></div>
<div class="r" style="left:841.00px;top:355px;width:77.0px;height:13.0px;background:#ffffff"></div>
<div class="r" style="left:920.00px;top:355px;width:77.0px;height:13.0px;background:#ffffff"></div>
<div class="r" style="left:999.00px;top:355px;width:77.0px;height:13.0px;background:#ffffff"></div>
<div class="r" style="left:1394.00px;top:355px;width:77.0px;height:13.0px;background:#ffffff"></div>
<div class="r" style="left:525.00px;top:355px;width:77.0px;height:13.0px;background:#b9e4fa"></div>
<div class="r" style="left:1078.00px;top:355px;width:77.0px;height:13.0px;background:#b9e4fa"></div>
<div class="r" style="left:1236.00px;top:355px;width:77.0px;height:13.0px;background:#b9e4fa"></div>
<div class="r" style="left:1710.00px;top:355px;width:77.0px;height:13.0px;background:#b9e4fa"></div>
<div class="r" style="left:1157.00px;top:355px;width:77.0px;height:13.0px;background:linear-gradient(#f1f3f4,#bde3f8)"></div>
<div class="r" style="left:1315.00px;top:355px;width:77.0px;height:13.0px;background:linear-gradient(#f1f3f4,#bde3f8)"></div>
<div class="r" style="left:1473.00px;top:355px;width:77.0px;height:13.0px;background:linear-gradient(#f1f3f4,#bde3f8)"></div>
<div class="r" style="left:1552.00px;top:355px;width:77.0px;height:13.0px;background:linear-gradient(#f1f3f4,#bde3f8)"></div>
<div class="t" style="left:293.00px;top:355px">Renewal</div>
<div class="t rt" style="left:367.00px;top:355px;width:72.70px">22,200</div>
<div class="t rt" style="left:604.00px;top:355px;width:72.70px">22,200</div>
<div class="t" style="left:684.80px;top:355px">Abbigail Cabrera</div>
<div class="t" style="left:767.00px;top:355px">CSM</div>
<div class="t rt" style="left:841.00px;top:355px;width:75.70px">Apr-18-2021</div>
<div class="t rt" style="left:920.00px;top:355px;width:75.70px">Jun-3-2021</div>
<div class="t rt" style="left:999.00px;top:355px;width:75.70px">Jun-2-2022</div>
<div class="t" style="left:1317.40px;top:355px">Y</div>
<svg class="r" style="left:1325.40px;top:360.30px" width="4" height="3" viewBox="0 0 4 3"><polygon points="0,0 3.6,0 1.8,3" fill="#3a3a3a"/></svg>
<div class="t rt" style="left:1394.00px;top:355px;width:75.80px">Jun-2-2031</div>
<svg class="r" style="left:1664.35px;top:355.5px" width="12" height="12" viewBox="0 0 12 12"><path d="M1.65 6.3 L4.75 9.6 L9.65 0.5" fill="none" stroke="#a9a9a9" stroke-width="1.3"/></svg>
<div class="r" style="left:1631.50px;top:369px;width:77.00px;height:1px;background:#d2d2d2"></div>
<div class="lid" style="left:30px;top:370px">CON-ID 246</div>
<div class="r" style="left:27.00px;top:384.00px;width:242.50px;height:1.00px;background:#d0d0d0;"></div>
<div class="r" style="left:288.00px;top:370px;width:77.0px;height:13.0px;background:#ffffff"></div>
<div class="r" style="left:367.00px;top:370px;width:77.0px;height:13.0px;background:#ffffff"></div>
<div class="r" style="left:446.00px;top:370px;width:77.0px;height:13.0px;background:#ffffff"></div>
<div class="r" style="left:604.00px;top:370px;width:77.0px;height:13.0px;background:#ffffff"></div>
<div class="r" style="left:683.00px;top:370px;width:77.0px;height:13.0px;background:#ffffff"></div>
<div class="r" style="left:762.00px;top:370px;width:77.0px;height:13.0px;background:#ffffff"></div>
<div class="r" style="left:841.00px;top:370px;width:77.0px;height:13.0px;background:#ffffff"></div>
<div class="r" style="left:920.00px;top:370px;width:77.0px;height:13.0px;background:#ffffff"></div>
<div class="r" style="left:999.00px;top:370px;width:77.0px;height:13.0px;background:#ffffff"></div>
<div class="r" style="left:1394.00px;top:370px;width:77.0px;height:13.0px;background:#ffffff"></div>
<div class="r" style="left:525.00px;top:370px;width:77.0px;height:13.0px;background:#b9e4fa"></div>
<div class="r" style="left:1078.00px;top:370px;width:77.0px;height:13.0px;background:#b9e4fa"></div>
<div class="r" style="left:1236.00px;top:370px;width:77.0px;height:13.0px;background:#b9e4fa"></div>
<div class="r" style="left:1710.00px;top:370px;width:77.0px;height:13.0px;background:#b9e4fa"></div>
<div class="r" style="left:1157.00px;top:370px;width:77.0px;height:13.0px;background:linear-gradient(#f1f3f4,#bde3f8)"></div>
<div class="r" style="left:1315.00px;top:370px;width:77.0px;height:13.0px;background:linear-gradient(#f1f3f4,#bde3f8)"></div>
<div class="r" style="left:1473.00px;top:370px;width:77.0px;height:13.0px;background:linear-gradient(#f1f3f4,#bde3f8)"></div>
<div class="r" style="left:1552.00px;top:370px;width:77.0px;height:13.0px;background:linear-gradient(#f1f3f4,#bde3f8)"></div>
<div class="t" style="left:293.00px;top:370px">New</div>
<div class="t rt" style="left:367.00px;top:370px;width:72.70px">32,800</div>
<div class="t rt" style="left:604.00px;top:370px;width:72.70px">32,800</div>
<div class="t" style="left:684.80px;top:370px">Karli Allison</div>
<div class="t" style="left:767.00px;top:370px">Client Sales</div>
<div class="t rt" style="left:841.00px;top:370px;width:75.70px">Feb-5-2022</div>
<div class="t rt" style="left:920.00px;top:370px;width:75.70px">Feb-24-2022</div>
<div class="t rt" style="left:999.00px;top:370px;width:75.70px">Feb-23-2023</div>
<div class="t" style="left:1317.40px;top:370px">Y</div>
<svg class="r" style="left:1325.40px;top:375.30px" width="4" height="3" viewBox="0 0 4 3"><polygon points="0,0 3.6,0 1.8,3" fill="#3a3a3a"/></svg>
<div class="t rt" style="left:1394.00px;top:370px;width:75.80px">Feb-23-2032</div>
<svg class="r" style="left:1664.35px;top:370.5px" width="12" height="12" viewBox="0 0 12 12"><path d="M1.65 6.3 L4.75 9.6 L9.65 0.5" fill="none" stroke="#a9a9a9" stroke-width="1.3"/></svg>
<div class="r" style="left:1631.50px;top:384px;width:77.00px;height:1px;background:#d2d2d2"></div>
<div class="lid" style="left:30px;top:385px">CON-ID 290</div>
<div class="r" style="left:27.00px;top:399.00px;width:242.50px;height:1.00px;background:#d0d0d0;"></div>
<div class="r" style="left:288.00px;top:385px;width:77.0px;height:13.0px;background:#ffffff"></div>
<div class="r" style="left:367.00px;top:385px;width:77.0px;height:13.0px;background:#ffffff"></div>
<div class="r" style="left:446.00px;top:385px;width:77.0px;height:13.0px;background:#ffffff"></div>
<div class="r" style="left:604.00px;top:385px;width:77.0px;height:13.0px;background:#ffffff"></div>
<div class="r" style="left:683.00px;top:385px;width:77.0px;height:13.0px;background:#ffffff"></div>
<div class="r" style="left:762.00px;top:385px;width:77.0px;height:13.0px;background:#ffffff"></div>
<div class="r" style="left:841.00px;top:385px;width:77.0px;height:13.0px;background:#ffffff"></div>
<div class="r" style="left:920.00px;top:385px;width:77.0px;height:13.0px;background:#ffffff"></div>
<div class="r" style="left:999.00px;top:385px;width:77.0px;height:13.0px;background:#ffffff"></div>
<div class="r" style="left:1394.00px;top:385px;width:77.0px;height:13.0px;background:#ffffff"></div>
<div class="r" style="left:525.00px;top:385px;width:77.0px;height:13.0px;background:#b9e4fa"></div>
<div class="r" style="left:1078.00px;top:385px;width:77.0px;height:13.0px;background:#b9e4fa"></div>
<div class="r" style="left:1236.00px;top:385px;width:77.0px;height:13.0px;background:#b9e4fa"></div>
<div class="r" style="left:1710.00px;top:385px;width:77.0px;height:13.0px;background:#b9e4fa"></div>
<div class="r" style="left:1157.00px;top:385px;width:77.0px;height:13.0px;background:linear-gradient(#f1f3f4,#bde3f8)"></div>
<div class="r" style="left:1315.00px;top:385px;width:77.0px;height:13.0px;background:linear-gradient(#f1f3f4,#bde3f8)"></div>
<div class="r" style="left:1473.00px;top:385px;width:77.0px;height:13.0px;background:linear-gradient(#f1f3f4,#bde3f8)"></div>
<div class="r" style="left:1552.00px;top:385px;width:77.0px;height:13.0px;background:linear-gradient(#f1f3f4,#bde3f8)"></div>
<div class="t" style="left:293.00px;top:385px">New</div>
<div class="t rt" style="left:367.00px;top:385px;width:72.70px">200,700</div>
<div class="t rt" style="left:604.00px;top:385px;width:72.70px">200,700</div>
<div class="t" style="left:684.80px;top:385px">Miriam Montoya</div>
<div class="t" style="left:767.00px;top:385px">Client Sales</div>
<div class="t rt" style="left:841.00px;top:385px;width:75.70px">Feb-21-2022</div>
<div class="t rt" style="left:920.00px;top:385px;width:75.70px">Apr-2-2022</div>
<div class="t rt" style="left:999.00px;top:385px;width:75.70px">Apr-1-2023</div>
<div class="t" style="left:1317.40px;top:385px">Y</div>
<svg class="r" style="left:1325.40px;top:390.30px" width="4" height="3" viewBox="0 0 4 3"><polygon points="0,0 3.6,0 1.8,3" fill="#3a3a3a"/></svg>
<div class="t rt" style="left:1394.00px;top:385px;width:75.80px">Apr-1-2032</div>
<svg class="r" style="left:1664.35px;top:385.5px" width="12" height="12" viewBox="0 0 12 12"><path d="M1.65 6.3 L4.75 9.6 L9.65 0.5" fill="none" stroke="#a9a9a9" stroke-width="1.3"/></svg>
<div class="r" style="left:1631.50px;top:399px;width:77.00px;height:1px;background:#d2d2d2"></div>
<div class="lid" style="left:30px;top:400px">CON-ID 259</div>
<div class="r" style="left:27.00px;top:414.00px;width:242.50px;height:1.00px;background:#d0d0d0;"></div>
<div class="r" style="left:288.00px;top:400px;width:77.0px;height:13.0px;background:#ffffff"></div>
<div class="r" style="left:367.00px;top:400px;width:77.0px;height:13.0px;background:#ffffff"></div>
<div class="r" style="left:446.00px;top:400px;width:77.0px;height:13.0px;background:#ffffff"></div>
<div class="r" style="left:604.00px;top:400px;width:77.0px;height:13.0px;background:#ffffff"></div>
<div class="r" style="left:683.00px;top:400px;width:77.0px;height:13.0px;background:#ffffff"></div>
<div class="r" style="left:762.00px;top:400px;width:77.0px;height:13.0px;background:#ffffff"></div>
<div class="r" style="left:841.00px;top:400px;width:77.0px;height:13.0px;background:#ffffff"></div>
<div class="r" style="left:920.00px;top:400px;width:77.0px;height:13.0px;background:#ffffff"></div>
<div class="r" style="left:999.00px;top:400px;width:77.0px;height:13.0px;background:#ffffff"></div>
<div class="r" style="left:1394.00px;top:400px;width:77.0px;height:13.0px;background:#ffffff"></div>
<div class="r" style="left:525.00px;top:400px;width:77.0px;height:13.0px;background:#b9e4fa"></div>
<div class="r" style="left:1078.00px;top:400px;width:77.0px;height:13.0px;background:#b9e4fa"></div>
<div class="r" style="left:1236.00px;top:400px;width:77.0px;height:13.0px;background:#b9e4fa"></div>
<div class="r" style="left:1710.00px;top:400px;width:77.0px;height:13.0px;background:#b9e4fa"></div>
<div class="r" style="left:1157.00px;top:400px;width:77.0px;height:13.0px;background:linear-gradient(#f1f3f4,#bde3f8)"></div>
<div class="r" style="left:1315.00px;top:400px;width:77.0px;height:13.0px;background:linear-gradient(#f1f3f4,#bde3f8)"></div>
<div class="r" style="left:1473.00px;top:400px;width:77.0px;height:13.0px;background:linear-gradient(#f1f3f4,#bde3f8)"></div>
<div class="r" style="left:1552.00px;top:400px;width:77.0px;height:13.0px;background:linear-gradient(#f1f3f4,#bde3f8)"></div>
<div class="t" style="left:293.00px;top:400px">Renewal</div>
<div class="t rt" style="left:367.00px;top:400px;width:72.70px">28,200</div>
<div class="t rt" style="left:604.00px;top:400px;width:72.70px">28,200</div>
<div class="t" style="left:684.80px;top:400px">Tabitha Finley</div>
<div class="t" style="left:767.00px;top:400px">CSM</div>
<div class="t rt" style="left:841.00px;top:400px;width:75.70px">Aug-6-2021</div>
<div class="t rt" style="left:920.00px;top:400px;width:75.70px">Aug-19-2021</div>
<div class="t rt" style="left:999.00px;top:400px;width:75.70px">Aug-18-2022</div>
<div class="t" style="left:1159.00px;top:400px">High</div>
<svg class="r" style="left:1179.00px;top:405.30px" width="4" height="3" viewBox="0 0 4 3"><polygon points="0,0 3.6,0 1.8,3" fill="#3a3a3a"/></svg>
<div class="t rt" style="left:1236.00px;top:400px;width:75.70px">Aug-18-2022</div>
<div class="t" style="left:1317.40px;top:400px">Y</div>
<svg class="r" style="left:1325.40px;top:405.30px" width="4" height="3" viewBox="0 0 4 3"><polygon points="0,0 3.6,0 1.8,3" fill="#3a3a3a"/></svg>
<div class="t rt" style="left:1394.00px;top:400px;width:75.80px">Aug-18-2022</div>
<svg class="r" style="left:1664.35px;top:400.5px" width="12" height="12" viewBox="0 0 12 12"><path d="M1.65 6.3 L4.75 9.6 L9.65 0.5" fill="none" stroke="#a9a9a9" stroke-width="1.3"/></svg>
<div class="r" style="left:1631.50px;top:414px;width:77.00px;height:1px;background:#d2d2d2"></div>
<div class="lid" style="left:30px;top:415px">CON-ID 275</div>
<div class="r" style="left:27.00px;top:429.00px;width:242.50px;height:1.00px;background:#d0d0d0;"></div>
<div class="r" style="left:288.00px;top:415px;width:77.0px;height:13.0px;background:#ffffff"></div>
<div class="r" style="left:367.00px;top:415px;width:77.0px;height:13.0px;background:#ffffff"></div>
<div class="r" style="left:446.00px;top:415px;width:77.0px;height:13.0px;background:#ffffff"></div>
<div class="r" style="left:604.00px;top:415px;width:77.0px;height:13.0px;background:#ffffff"></div>
<div class="r" style="left:683.00px;top:415px;width:77.0px;height:13.0px;background:#ffffff"></div>
<div class="r" style="left:762.00px;top:415px;width:77.0px;height:13.0px;background:#ffffff"></div>
<div class="r" style="left:841.00px;top:415px;width:77.0px;height:13.0px;background:#ffffff"></div>
<div class="r" style="left:920.00px;top:415px;width:77.0px;height:13.0px;background:#ffffff"></div>
<div class="r" style="left:999.00px;top:415px;width:77.0px;height:13.0px;background:#ffffff"></div>
<div class="r" style="left:1394.00px;top:415px;width:77.0px;height:13.0px;background:#ffffff"></div>
<div class="r" style="left:525.00px;top:415px;width:77.0px;height:13.0px;background:#b9e4fa"></div>
<div class="r" style="left:1078.00px;top:415px;width:77.0px;height:13.0px;background:#b9e4fa"></div>
<div class="r" style="left:1236.00px;top:415px;width:77.0px;height:13.0px;background:#b9e4fa"></div>
<div class="r" style="left:1710.00px;top:415px;width:77.0px;height:13.0px;background:#b9e4fa"></div>
<div class="r" style="left:1157.00px;top:415px;width:77.0px;height:13.0px;background:linear-gradient(#f1f3f4,#bde3f8)"></div>
<div class="r" style="left:1315.00px;top:415px;width:77.0px;height:13.0px;background:linear-gradient(#f1f3f4,#bde3f8)"></div>
<div class="r" style="left:1473.00px;top:415px;width:77.0px;height:13.0px;background:linear-gradient(#f1f3f4,#bde3f8)"></div>
<div class="r" style="left:1552.00px;top:415px;width:77.0px;height:13.0px;background:linear-gradient(#f1f3f4,#bde3f8)"></div>
<div class="t" style="left:293.00px;top:415px">New</div>
<div class="t rt" style="left:367.00px;top:415px;width:72.70px">55,200</div>
<div class="t rt" style="left:604.00px;top:415px;width:72.70px">55,200</div>
<div class="t" style="left:684.80px;top:415px">Landon Reilly</div>
<div class="t" style="left:767.00px;top:415px">CSM</div>
<div class="t rt" style="left:841.00px;top:415px;width:75.70px">Apr-12-2021</div>
<div class="t rt" style="left:920.00px;top:415px;width:75.70px">Jun-11-2021</div>
<div class="t rt" style="left:999.00px;top:415px;width:75.70px">Jun-10-2022</div>
<div class="t" style="left:1317.40px;top:415px">Y</div>
<svg class="r" style="left:1325.40px;top:420.30px" width="4" height="3" viewBox="0 0 4 3"><polygon points="0,0 3.6,0 1.8,3" fill="#3a3a3a"/></svg>
<div class="t rt" style="left:1394.00px;top:415px;width:75.80px">Jun-10-2031</div>
<svg class="r" style="left:1664.35px;top:415.5px" width="12" height="12" viewBox="0 0 12 12"><path d="M1.65 6.3 L4.75 9.6 L9.65 0.5" fill="none" stroke="#a9a9a9" stroke-width="1.3"/></svg>
<div class="r" style="left:1631.50px;top:429px;width:77.00px;height:1px;background:#d2d2d2"></div>
<div class="lid" style="left:30px;top:430px">CON-ID 343</div>
<div class="r" style="left:27.00px;top:444.00px;width:242.50px;height:1.00px;background:#d0d0d0;"></div>
<div class="r" style="left:288.00px;top:430px;width:77.0px;height:13.0px;background:#ffffff"></div>
<div class="r" style="left:367.00px;top:430px;width:77.0px;height:13.0px;background:#ffffff"></div>
<div class="r" style="left:446.00px;top:430px;width:77.0px;height:13.0px;background:#ffffff"></div>
<div class="r" style="left:604.00px;top:430px;width:77.0px;height:13.0px;background:#ffffff"></div>
<div class="r" style="left:683.00px;top:430px;width:77.0px;height:13.0px;background:#ffffff"></div>
<div class="r" style="left:762.00px;top:430px;width:77.0px;height:13.0px;background:#ffffff"></div>
<div class="r" style="left:841.00px;top:430px;width:77.0px;height:13.0px;background:#ffffff"></div>
<div class="r" style="left:920.00px;top:430px;width:77.0px;height:13.0px;background:#ffffff"></div>
<div class="r" style="left:999.00px;top:430px;width:77.0px;height:13.0px;background:#ffffff"></div>
<div class="r" style="left:1394.00px;top:430px;width:77.0px;height:13.0px;background:#ffffff"></div>
<div class="r" style="left:525.00px;top:430px;width:77.0px;height:13.0px;background:#b9e4fa"></div>
<div class="r" style="left:1078.00px;top:430px;width:77.0px;height:13.0px;background:#b9e4fa"></div>
<div class="r" style="left:1236.00px;top:430px;width:77.0px;height:13.0px;background:#b9e4fa"></div>
<div class="r" style="left:1710.00px;top:430px;width:77.0px;height:13.0px;background:#b9e4fa"></div>
<div class="r" style="left:1157.00px;top:430px;width:77.0px;height:13.0px;background:linear-gradient(#f1f3f4,#bde3f8)"></div>
<div class="r" style="left:1315.00px;top:430px;width:77.0px;height:13.0px;background:linear-gradient(#f1f3f4,#bde3f8)"></div>
<div class="r" style="left:1473.00px;top:430px;width:77.0px;height:13.0px;background:linear-gradient(#f1f3f4,#bde3f8)"></div>
<div class="r" style="left:1552.00px;top:430px;width:77.0px;height:13.0px;background:linear-gradient(#f1f3f4,#bde3f8)"></div>
<div class="t" style="left:293.00px;top:430px">New</div>
<div class="t rt" style="left:367.00px;top:430px;width:72.70px">77,300</div>
<div class="t rt" style="left:604.00px;top:430px;width:72.70px">77,300</div>
<div class="t" style="left:684.80px;top:430px">Payton Woods</div>
<div class="t" style="left:767.00px;top:430px">VP Growth</div>
<div class="t rt" style="left:841.00px;top:430px;width:75.70px">Apr-17-2022</div>
<div class="t rt" style="left:920.00px;top:430px;width:75.70px">Jun-11-2022</div>
<div class="t rt" style="left:999.00px;top:430px;width:75.70px">Jun-10-2023</div>
<div class="t" style="left:1317.40px;top:430px">Y</div>
<svg class="r" style="left:1325.40px;top:435.30px" width="4" height="3" viewBox="0 0 4 3"><polygon points="0,0 3.6,0 1.8,3" fill="#3a3a3a"/></svg>
<div class="t rt" style="left:1394.00px;top:430px;width:75.80px">Jun-10-2032</div>
<svg class="r" style="left:1664.35px;top:430.5px" width="12" height="12" viewBox="0 0 12 12"><path d="M1.65 6.3 L4.75 9.6 L9.65 0.5" fill="none" stroke="#a9a9a9" stroke-width="1.3"/></svg>
<div class="r" style="left:1631.50px;top:444px;width:77.00px;height:1px;background:#d2d2d2"></div>
<div class="lid" style="left:30px;top:445px">CON-ID 415</div>
<div class="r" style="left:27.00px;top:459.00px;width:242.50px;height:1.00px;background:#d0d0d0;"></div>
<div class="r" style="left:288.00px;top:445px;width:77.0px;height:13.0px;background:#ffffff"></div>
<div class="r" style="left:367.00px;top:445px;width:77.0px;height:13.0px;background:#ffffff"></div>
<div class="r" style="left:446.00px;top:445px;width:77.0px;height:13.0px;background:#ffffff"></div>
<div class="r" style="left:604.00px;top:445px;width:77.0px;height:13.0px;background:#ffffff"></div>
<div class="r" style="left:683.00px;top:445px;width:77.0px;height:13.0px;background:#ffffff"></div>
<div class="r" style="left:762.00px;top:445px;width:77.0px;height:13.0px;background:#ffffff"></div>
<div class="r" style="left:841.00px;top:445px;width:77.0px;height:13.0px;background:#ffffff"></div>
<div class="r" style="left:920.00px;top:445px;width:77.0px;height:13.0px;background:#ffffff"></div>
<div class="r" style="left:999.00px;top:445px;width:77.0px;height:13.0px;background:#ffffff"></div>
<div class="r" style="left:1394.00px;top:445px;width:77.0px;height:13.0px;background:#ffffff"></div>
<div class="r" style="left:525.00px;top:445px;width:77.0px;height:13.0px;background:#b9e4fa"></div>
<div class="r" style="left:1078.00px;top:445px;width:77.0px;height:13.0px;background:#b9e4fa"></div>
<div class="r" style="left:1236.00px;top:445px;width:77.0px;height:13.0px;background:#b9e4fa"></div>
<div class="r" style="left:1710.00px;top:445px;width:77.0px;height:13.0px;background:#b9e4fa"></div>
<div class="r" style="left:1157.00px;top:445px;width:77.0px;height:13.0px;background:linear-gradient(#f1f3f4,#bde3f8)"></div>
<div class="r" style="left:1315.00px;top:445px;width:77.0px;height:13.0px;background:linear-gradient(#f1f3f4,#bde3f8)"></div>
<div class="r" style="left:1473.00px;top:445px;width:77.0px;height:13.0px;background:linear-gradient(#f1f3f4,#bde3f8)"></div>
<div class="r" style="left:1552.00px;top:445px;width:77.0px;height:13.0px;background:linear-gradient(#f1f3f4,#bde3f8)"></div>
<div class="t" style="left:293.00px;top:445px">New</div>
<div class="t rt" style="left:367.00px;top:445px;width:72.70px">10,600</div>
<div class="t rt" style="left:604.00px;top:445px;width:72.70px">10,600</div>
<div class="t" style="left:684.80px;top:445px">Cassie Nielsen</div>
<div class="t" style="left:767.00px;top:445px">Client Sales</div>
<div class="t rt" style="left:841.00px;top:445px;width:75.70px">Apr-10-2022</div>
<div class="t rt" style="left:920.00px;top:445px;width:75.70px">May-30-2022</div>
<div class="t rt" style="left:999.00px;top:445px;width:75.70px">May-29-2023</div>
<div class="t" style="left:1317.40px;top:445px">Y</div>
<svg class="r" style="left:1325.40px;top:450.30px" width="4" height="3" viewBox="0 0 4 3"><polygon points="0,0 3.6,0 1.8,3" fill="#3a3a3a"/></svg>
<div class="t rt" style="left:1394.00px;top:445px;width:75.80px">May-29-2032</div>
<svg class="r" style="left:1664.35px;top:445.5px" width="12" height="12" viewBox="0 0 12 12"><path d="M1.65 6.3 L4.75 9.6 L9.65 0.5" fill="none" stroke="#a9a9a9" stroke-width="1.3"/></svg>
<div class="r" style="left:1631.50px;top:459px;width:77.00px;height:1px;background:#d2d2d2"></div>
<div class="lid" style="left:30px;top:460px">CON-ID 398</div>
<div class="r" style="left:27.00px;top:474.00px;width:242.50px;height:1.00px;background:#d0d0d0;"></div>
<div class="r" style="left:288.00px;top:460px;width:77.0px;height:13.0px;background:#ffffff"></div>
<div class="r" style="left:367.00px;top:460px;width:77.0px;height:13.0px;background:#ffffff"></div>
<div class="r" style="left:446.00px;top:460px;width:77.0px;height:13.0px;background:#ffffff"></div>
<div class="r" style="left:604.00px;top:460px;width:77.0px;height:13.0px;background:#ffffff"></div>
<div class="r" style="left:683.00px;top:460px;width:77.0px;height:13.0px;background:#ffffff"></div>
<div class="r" style="left:762.00px;top:460px;width:77.0px;height:13.0px;background:#ffffff"></div>
<div class="r" style="left:841.00px;top:460px;width:77.0px;height:13.0px;background:#ffffff"></div>
<div class="r" style="left:920.00px;top:460px;width:77.0px;height:13.0px;background:#ffffff"></div>
<div class="r" style="left:999.00px;top:460px;width:77.0px;height:13.0px;background:#ffffff"></div>
<div class="r" style="left:1394.00px;top:460px;width:77.0px;height:13.0px;background:#ffffff"></div>
<div class="r" style="left:525.00px;top:460px;width:77.0px;height:13.0px;background:#b9e4fa"></div>
<div class="r" style="left:1078.00px;top:460px;width:77.0px;height:13.0px;background:#b9e4fa"></div>
<div class="r" style="left:1236.00px;top:460px;width:77.0px;height:13.0px;background:#b9e4fa"></div>
<div class="r" style="left:1710.00px;top:460px;width:77.0px;height:13.0px;background:#b9e4fa"></div>
<div class="r" style="left:1157.00px;top:460px;width:77.0px;height:13.0px;background:linear-gradient(#f1f3f4,#bde3f8)"></div>
<div class="r" style="left:1315.00px;top:460px;width:77.0px;height:13.0px;background:linear-gradient(#f1f3f4,#bde3f8)"></div>
<div class="r" style="left:1473.00px;top:460px;width:77.0px;height:13.0px;background:linear-gradient(#f1f3f4,#bde3f8)"></div>
<div class="r" style="left:1552.00px;top:460px;width:77.0px;height:13.0px;background:linear-gradient(#f1f3f4,#bde3f8)"></div>
<div class="t" style="left:293.00px;top:460px">New</div>
<div class="t rt" style="left:367.00px;top:460px;width:72.70px">122,500</div>
<div class="t rt" style="left:604.00px;top:460px;width:72.70px">122,500</div>
<div class="t" style="left:684.80px;top:460px">Karli Allison</div>
<div class="t" style="left:767.00px;top:460px">Client Sales</div>
<div class="t rt" style="left:841.00px;top:460px;width:75.70px">Jul-14-2020</div>
<div class="t rt" style="left:920.00px;top:460px;width:75.70px">Aug-22-2020</div>
<div class="t rt" style="left:999.00px;top:460px;width:75.70px">Aug-21-2021</div>
<div class="t" style="left:1317.40px;top:460px">Y</div>
<svg class="r" style="left:1325.40px;top:465.30px" width="4" height="3" viewBox="0 0 4 3"><polygon points="0,0 3.6,0 1.8,3" fill="#3a3a3a"/></svg>
<div class="t rt" style="left:1394.00px;top:460px;width:75.80px">Aug-21-2030</div>
<svg class="r" style="left:1664.35px;top:460.5px" width="12" height="12" viewBox="0 0 12 12"><path d="M1.65 6.3 L4.75 9.6 L9.65 0.5" fill="none" stroke="#a9a9a9" stroke-width="1.3"/></svg>
<div class="r" style="left:1631.50px;top:474px;width:77.00px;height:1px;background:#d2d2d2"></div>
<div class="lid" style="left:30px;top:475px">CON-ID 213</div>
<div class="r" style="left:27.00px;top:489.00px;width:242.50px;height:1.00px;background:#d0d0d0;"></div>
<div class="r" style="left:288.00px;top:475px;width:77.0px;height:13.0px;background:#ffffff"></div>
<div class="r" style="left:367.00px;top:475px;width:77.0px;height:13.0px;background:#ffffff"></div>
<div class="r" style="left:446.00px;top:475px;width:77.0px;height:13.0px;background:#ffffff"></div>
<div class="r" style="left:604.00px;top:475px;width:77.0px;height:13.0px;background:#ffffff"></div>
<div class="r" style="left:683.00px;top:475px;width:77.0px;height:13.0px;background:#ffffff"></div>
<div class="r" style="left:762.00px;top:475px;width:77.0px;height:13.0px;background:#ffffff"></div>
<div class="r" style="left:841.00px;top:475px;width:77.0px;height:13.0px;background:#ffffff"></div>
<div class="r" style="left:920.00px;top:475px;width:77.0px;height:13.0px;background:#ffffff"></div>
<div class="r" style="left:999.00px;top:475px;width:77.0px;height:13.0px;background:#ffffff"></div>
<div class="r" style="left:1394.00px;top:475px;width:77.0px;height:13.0px;background:#ffffff"></div>
<div class="r" style="left:525.00px;top:475px;width:77.0px;height:13.0px;background:#b9e4fa"></div>
<div class="r" style="left:1078.00px;top:475px;width:77.0px;height:13.0px;background:#b9e4fa"></div>
<div class="r" style="left:1236.00px;top:475px;width:77.0px;height:13.0px;background:#b9e4fa"></div>
<div class="r" style="left:1710.00px;top:475px;width:77.0px;height:13.0px;background:#b9e4fa"></div>
<div class="r" style="left:1157.00px;top:475px;width:77.0px;height:13.0px;background:linear-gradient(#f1f3f4,#bde3f8)"></div>
<div class="r" style="left:1315.00px;top:475px;width:77.0px;height:13.0px;background:linear-gradient(#f1f3f4,#bde3f8)"></div>
<div class="r" style="left:1473.00px;top:475px;width:77.0px;height:13.0px;background:linear-gradient(#f1f3f4,#bde3f8)"></div>
<div class="r" style="left:1552.00px;top:475px;width:77.0px;height:13.0px;background:linear-gradient(#f1f3f4,#bde3f8)"></div>
<div class="t" style="left:293.00px;top:475px">Expansion</div>
<div class="t rt" style="left:367.00px;top:475px;width:72.70px">166,500</div>
<div class="t rt" style="left:525.00px;top:475px;width:72.70px">120,000</div>
<div class="t rt" style="left:604.00px;top:475px;width:72.70px">120,000</div>
<div class="t" style="left:684.80px;top:475px">Ricardo Sexton</div>
<div class="t" style="left:767.00px;top:475px">Client Sales</div>
<div class="t rt" style="left:841.00px;top:475px;width:75.70px">Jan-8-2022</div>
<div class="t rt" style="left:920.00px;top:475px;width:75.70px">Jan-27-2022</div>
<div class="t rt" style="left:999.00px;top:475px;width:75.70px">Jan-26-2023</div>
<div class="t" style="left:1317.40px;top:475px">Y</div>
<svg class="r" style="left:1325.40px;top:480.30px" width="4" height="3" viewBox="0 0 4 3"><polygon points="0,0 3.6,0 1.8,3" fill="#3a3a3a"/></svg>
<div class="t rt" style="left:1394.00px;top:475px;width:75.80px">Jan-26-2032</div>
<svg class="r" style="left:1664.35px;top:475.5px" width="12" height="12" viewBox="0 0 12 12"><path d="M1.65 6.3 L4.75 9.6 L9.65 0.5" fill="none" stroke="#a9a9a9" stroke-width="1.3"/></svg>
<div class="r" style="left:1631.50px;top:489px;width:77.00px;height:1px;background:#d2d2d2"></div>
<div class="r" style="left:1474.00px;top:478px;font-size:6.3px;line-height:8px;color:#444;white-space:nowrap;transform:scaleX(.87);transform-origin:0 0">Subscription Start Date</div>
<svg class="r" style="left:1535.50px;top:480.80px" width="3" height="3" viewBox="0 0 3 3"><polygon points="0,0 2.4,0 1.2,2.2" fill="#444"/></svg>
<div class="t" style="left:1554.50px;top:475px">Annual</div>
<svg class="r" style="left:1584.90px;top:480.30px" width="4" height="3" viewBox="0 0 4 3"><polygon points="0,0 3.6,0 1.8,3" fill="#3a3a3a"/></svg>
<div class="t rt" style="left:1710.00px;top:475px;width:73.30px">60</div>
<div class="lid" style="left:30px;top:490px">CON-ID 265</div>
<div class="r" style="left:27.00px;top:504.00px;width:242.50px;height:1.00px;background:#d0d0d0;"></div>
<div class="r" style="left:288.00px;top:490px;width:77.0px;height:13.0px;background:#ffffff"></div>
<div class="r" style="left:367.00px;top:490px;width:77.0px;height:13.0px;background:#ffffff"></div>
<div class="r" style="left:446.00px;top:490px;width:77.0px;height:13.0px;background:#ffffff"></div>
<div class="r" style="left:604.00px;top:490px;width:77.0px;height:13.0px;background:#ffffff"></div>
<div class="r" style="left:683.00px;top:490px;width:77.0px;height:13.0px;background:#ffffff"></div>
<div class="r" style="left:762.00px;top:490px;width:77.0px;height:13.0px;background:#ffffff"></div>
<div class="r" style="left:841.00px;top:490px;width:77.0px;height:13.0px;background:#ffffff"></div>
<div class="r" style="left:920.00px;top:490px;width:77.0px;height:13.0px;background:#ffffff"></div>
<div class="r" style="left:999.00px;top:490px;width:77.0px;height:13.0px;background:#ffffff"></div>
<div class="r" style="left:1394.00px;top:490px;width:77.0px;height:13.0px;background:#ffffff"></div>
<div class="r" style="left:525.00px;top:490px;width:77.0px;height:13.0px;background:#b9e4fa"></div>
<div class="r" style="left:1078.00px;top:490px;width:77.0px;height:13.0px;background:#b9e4fa"></div>
<div class="r" style="left:1236.00px;top:490px;width:77.0px;height:13.0px;background:#b9e4fa"></div>
<div class="r" style="left:1710.00px;top:490px;width:77.0px;height:13.0px;background:#b9e4fa"></div>
<div class="r" style="left:1157.00px;top:490px;width:77.0px;height:13.0px;background:linear-gradient(#f1f3f4,#bde3f8)"></div>
<div class="r" style="left:1315.00px;top:490px;width:77.0px;height:13.0px;background:linear-gradient(#f1f3f4,#bde3f8)"></div>
<div class="r" style="left:1473.00px;top:490px;width:77.0px;height:13.0px;background:linear-gradient(#f1f3f4,#bde3f8)"></div>
<div class="r" style="left:1552.00px;top:490px;width:77.0px;height:13.0px;background:linear-gradient(#f1f3f4,#bde3f8)"></div>
<div class="t" style="left:293.00px;top:490px">Renewal</div>
<div class="t rt" style="left:367.00px;top:490px;width:72.70px">14,600</div>
<div class="t rt" style="left:604.00px;top:490px;width:72.70px">14,600</div>
<div class="t" style="left:684.80px;top:490px">Ellen Mitchell</div>
<div class="t" style="left:767.00px;top:490px">Enterprise</div>
<div class="t rt" style="left:841.00px;top:490px;width:75.70px">Dec-2-2021</div>
<div class="t rt" style="left:920.00px;top:490px;width:75.70px">Jan-8-2022</div>
<div class="t rt" style="left:999.00px;top:490px;width:75.70px">Jan-7-2023</div>
<div class="t" style="left:1317.40px;top:490px">Y</div>
<svg class="r" style="left:1325.40px;top:495.30px" width="4" height="3" viewBox="0 0 4 3"><polygon points="0,0 3.6,0 1.8,3" fill="#3a3a3a"/></svg>
<div class="t rt" style="left:1394.00px;top:490px;width:75.80px">Jan-7-2032</div>
<svg class="r" style="left:1664.35px;top:490.5px" width="12" height="12" viewBox="0 0 12 12"><path d="M1.65 6.3 L4.75 9.6 L9.65 0.5" fill="none" stroke="#a9a9a9" stroke-width="1.3"/></svg>
<div class="r" style="left:1631.50px;top:504px;width:77.00px;height:1px;background:#d2d2d2"></div>
<div class="lid" style="left:30px;top:505px">CON-ID 337</div>
<div class="r" style="left:27.00px;top:519.00px;width:242.50px;height:1.00px;background:#d0d0d0;"></div>
<div class="r" style="left:288.00px;top:505px;width:77.0px;height:13.0px;background:#ffffff"></div>
<div class="r" style="left:367.00px;top:505px;width:77.0px;height:13.0px;background:#ffffff"></div>
<div class="r" style="left:446.00px;top:505px;width:77.0px;height:13.0px;background:#ffffff"></div>
<div class="r" style="left:604.00px;top:505px;width:77.0px;height:13.0px;background:#ffffff"></div>
<div class="r" style="left:683.00px;top:505px;width:77.0px;height:13.0px;background:#ffffff"></div>
<div class="r" style="left:762.00px;top:505px;width:77.0px;height:13.0px;background:#ffffff"></div>
<div class="r" style="left:841.00px;top:505px;width:77.0px;height:13.0px;background:#ffffff"></div>
<div class="r" style="left:920.00px;top:505px;width:77.0px;height:13.0px;background:#ffffff"></div>
<div class="r" style="left:999.00px;top:505px;width:77.0px;height:13.0px;background:#ffffff"></div>
<div class="r" style="left:1394.00px;top:505px;width:77.0px;height:13.0px;background:#ffffff"></div>
<div class="r" style="left:525.00px;top:505px;width:77.0px;height:13.0px;background:#b9e4fa"></div>
<div class="r" style="left:1078.00px;top:505px;width:77.0px;height:13.0px;background:#b9e4fa"></div>
<div class="r" style="left:1236.00px;top:505px;width:77.0px;height:13.0px;background:#b9e4fa"></div>
<div class="r" style="left:1710.00px;top:505px;width:77.0px;height:13.0px;background:#b9e4fa"></div>
<div class="r" style="left:1157.00px;top:505px;width:77.0px;height:13.0px;background:linear-gradient(#f1f3f4,#bde3f8)"></div>
<div class="r" style="left:1315.00px;top:505px;width:77.0px;height:13.0px;background:linear-gradient(#f1f3f4,#bde3f8)"></div>
<div class="r" style="left:1473.00px;top:505px;width:77.0px;height:13.0px;background:linear-gradient(#f1f3f4,#bde3f8)"></div>
<div class="r" style="left:1552.00px;top:505px;width:77.0px;height:13.0px;background:linear-gradient(#f1f3f4,#bde3f8)"></div>
<div class="t" style="left:293.00px;top:505px">Renewal</div>
<div class="t rt" style="left:367.00px;top:505px;width:72.70px">246,000</div>
<div class="t rt" style="left:604.00px;top:505px;width:72.70px">246,000</div>
<div class="t" style="left:684.80px;top:505px">Kody Mcguire</div>
<div class="t" style="left:767.00px;top:505px">CSM</div>
<div class="t rt" style="left:841.00px;top:505px;width:75.70px">Feb-25-2022</div>
<div class="t rt" style="left:920.00px;top:505px;width:75.70px">Mar-4-2022</div>
<div class="t rt" style="left:999.00px;top:505px;width:75.70px">Mar-3-2023</div>
<div class="t" style="left:1317.40px;top:505px">Y</div>
<svg class="r" style="left:1325.40px;top:510.30px" width="4" height="3" viewBox="0 0 4 3"><polygon points="0,0 3.6,0 1.8,3" fill="#3a3a3a"/></svg>
<div class="t rt" style="left:1394.00px;top:505px;width:75.80px">Mar-3-2032</div>
<svg class="r" style="left:1664.35px;top:505.5px" width="12" height="12" viewBox="0 0 12 12"><path d="M1.65 6.3 L4.75 9.6 L9.65 0.5" fill="none" stroke="#a9a9a9" stroke-width="1.3"/></svg>
<div class="r" style="left:1631.50px;top:519px;width:77.00px;height:1px;background:#d2d2d2"></div>
<div class="lid" style="left:30px;top:520px">CON-ID 353</div>
<div class="r" style="left:27.00px;top:534.00px;width:242.50px;height:1.00px;background:#d0d0d0;"></div>
<div class="r" style="left:288.00px;top:520px;width:77.0px;height:13.0px;background:#ffffff"></div>
<div class="r" style="left:367.00px;top:520px;width:77.0px;height:13.0px;background:#ffffff"></div>
<div class="r" style="left:446.00px;top:520px;width:77.0px;height:13.0px;background:#ffffff"></div>
<div class="r" style="left:604.00px;top:520px;width:77.0px;height:13.0px;background:#ffffff"></div>
<div class="r" style="left:683.00px;top:520px;width:77.0px;height:13.0px;background:#ffffff"></div>
<div class="r" style="left:762.00px;top:520px;width:77.0px;height:13.0px;background:#ffffff"></div>
<div class="r" style="left:841.00px;top:520px;width:77.0px;height:13.0px;background:#ffffff"></div>
<div class="r" style="left:920.00px;top:520px;width:77.0px;height:13.0px;background:#ffffff"></div>
<div class="r" style="left:999.00px;top:520px;width:77.0px;height:13.0px;background:#ffffff"></div>
<div class="r" style="left:1394.00px;top:520px;width:77.0px;height:13.0px;background:#ffffff"></div>
<div class="r" style="left:525.00px;top:520px;width:77.0px;height:13.0px;background:#b9e4fa"></div>
<div class="r" style="left:1078.00px;top:520px;width:77.0px;height:13.0px;background:#b9e4fa"></div>
<div class="r" style="left:1236.00px;top:520px;width:77.0px;height:13.0px;background:#b9e4fa"></div>
<div class="r" style="left:1710.00px;top:520px;width:77.0px;height:13.0px;background:#b9e4fa"></div>
<div class="r" style="left:1157.00px;top:520px;width:77.0px;height:13.0px;background:linear-gradient(#f1f3f4,#bde3f8)"></div>
<div class="r" style="left:1315.00px;top:520px;width:77.0px;height:13.0px;background:linear-gradient(#f1f3f4,#bde3f8)"></div>
<div class="r" style="left:1473.00px;top:520px;width:77.0px;height:13.0px;background:linear-gradient(#f1f3f4,#bde3f8)"></div>
<div class="r" style="left:1552.00px;top:520px;width:77.0px;height:13.0px;background:linear-gradient(#f1f3f4,#bde3f8)"></div>
<div class="t" style="left:293.00px;top:520px">Renewal</div>
<div class="t rt" style="left:367.00px;top:520px;width:72.70px">21,000</div>
<div class="t rt" style="left:604.00px;top:520px;width:72.70px">21,000</div>
<div class="t" style="left:684.80px;top:520px">Tabitha Finley</div>
<div class="t" style="left:767.00px;top:520px">CSM</div>
<div class="t rt" style="left:841.00px;top:520px;width:75.70px">Jan-12-2022</div>
<div class="t rt" style="left:920.00px;top:520px;width:75.70px">Feb-18-2022</div>
<div class="t rt" style="left:999.00px;top:520px;width:75.70px">Feb-17-2023</div>
<div class="t" style="left:1317.40px;top:520px">Y</div>
<svg class="r" style="left:1325.40px;top:525.30px" width="4" height="3" viewBox="0 0 4 3"><polygon points="0,0 3.6,0 1.8,3" fill="#3a3a3a"/></svg>
<div class="t rt" style="left:1394.00px;top:520px;width:75.80px">Feb-17-2032</div>
<svg class="r" style="left:1664.35px;top:520.5px" width="12" height="12" viewBox="0 0 12 12"><path d="M1.65 6.3 L4.75 9.6 L9.65 0.5" fill="none" stroke="#a9a9a9" stroke-width="1.3"/></svg>
<div class="r" style="left:1631.50px;top:534px;width:77.00px;height:1px;background:#d2d2d2"></div>
<div class="lid" style="left:30px;top:535px">CON-ID 377</div>
<div class="r" style="left:27.00px;top:549.00px;width:242.50px;height:1.00px;background:#d0d0d0;"></div>
<div class="r" style="left:288.00px;top:535px;width:77.0px;height:13.0px;background:#ffffff"></div>
<div class="r" style="left:367.00px;top:535px;width:77.0px;height:13.0px;background:#ffffff"></div>
<div class="r" style="left:446.00px;top:535px;width:77.0px;height:13.0px;background:#ffffff"></div>
<div class="r" style="left:604.00px;top:535px;width:77.0px;height:13.0px;background:#ffffff"></div>
<div class="r" style="left:683.00px;top:535px;width:77.0px;height:13.0px;background:#ffffff"></div>
<div class="r" style="left:762.00px;top:535px;width:77.0px;height:13.0px;background:#ffffff"></div>
<div class="r" style="left:841.00px;top:535px;width:77.0px;height:13.0px;background:#ffffff"></div>
<div class="r" style="left:920.00px;top:535px;width:77.0px;height:13.0px;background:#ffffff"></div>
<div class="r" style="left:999.00px;top:535px;width:77.0px;height:13.0px;background:#ffffff"></div>
<div class="r" style="left:1394.00px;top:535px;width:77.0px;height:13.0px;background:#ffffff"></div>
<div class="r" style="left:525.00px;top:535px;width:77.0px;height:13.0px;background:#b9e4fa"></div>
<div class="r" style="left:1078.00px;top:535px;width:77.0px;height:13.0px;background:#b9e4fa"></div>
<div class="r" style="left:1236.00px;top:535px;width:77.0px;height:13.0px;background:#b9e4fa"></div>
<div class="r" style="left:1710.00px;top:535px;width:77.0px;height:13.0px;background:#b9e4fa"></div>
<div class="r" style="left:1157.00px;top:535px;width:77.0px;height:13.0px;background:linear-gradient(#f1f3f4,#bde3f8)"></div>
<div class="r" style="left:1315.00px;top:535px;width:77.0px;height:13.0px;background:linear-gradient(#f1f3f4,#bde3f8)"></div>
<div class="r" style="left:1473.00px;top:535px;width:77.0px;height:13.0px;background:linear-gradient(#f1f3f4,#bde3f8)"></div>
<div class="r" style="left:1552.00px;top:535px;width:77.0px;height:13.0px;background:linear-gradient(#f1f3f4,#bde3f8)"></div>
<div class="t" style="left:293.00px;top:535px">New</div>
<div class="t rt" style="left:367.00px;top:535px;width:72.70px">29,200</div>
<div class="t rt" style="left:604.00px;top:535px;width:72.70px">29,200</div>
<div class="t" style="left:684.80px;top:535px">Omari Patterson</div>
<div class="t" style="left:767.00px;top:535px">Client Sales</div>
<div class="t rt" style="left:841.00px;top:535px;width:75.70px">Apr-17-2021</div>
<div class="t rt" style="left:920.00px;top:535px;width:75.70px">May-28-2021</div>
<div class="t rt" style="left:999.00px;top:535px;width:75.70px">May-27-2022</div>
<div class="t" style="left:1317.40px;top:535px">Y</div>
<svg class="r" style="left:1325.40px;top:540.30px" width="4" height="3" viewBox="0 0 4 3"><polygon points="0,0 3.6,0 1.8,3" fill="#3a3a3a"/></svg>
<div class="t rt" style="left:1394.00px;top:535px;width:75.80px">May-27-2031</div>
<svg class="r" style="left:1664.35px;top:535.5px" width="12" height="12" viewBox="0 0 12 12"><path d="M1.65 6.3 L4.75 9.6 L9.65 0.5" fill="none" stroke="#a9a9a9" stroke-width="1.3"/></svg>
<div class="r" style="left:1631.50px;top:549px;width:77.00px;height:1px;background:#d2d2d2"></div>
<div class="lid" style="left:30px;top:550px">CON-ID 438</div>
<div class="r" style="left:27.00px;top:564.00px;width:242.50px;height:1.00px;background:#d0d0d0;"></div>
<div class="r" style="left:288.00px;top:550px;width:77.0px;height:13.0px;background:#ffffff"></div>
<div class="r" style="left:367.00px;top:550px;width:77.0px;height:13.0px;background:#ffffff"></div>
<div class="r" style="left:446.00px;top:550px;width:77.0px;height:13.0px;background:#ffffff"></div>
<div class="r" style="left:604.00px;top:550px;width:77.0px;height:13.0px;background:#ffffff"></div>
<div class="r" style="left:683.00px;top:550px;width:77.0px;height:13.0px;background:#ffffff"></div>
<div class="r" style="left:762.00px;top:550px;width:77.0px;height:13.0px;background:#ffffff"></div>
<div class="r" style="left:841.00px;top:550px;width:77.0px;height:13.0px;background:#ffffff"></div>
<div class="r" style="left:920.00px;top:550px;width:77.0px;height:13.0px;background:#ffffff"></div>
<div class="r" style="left:999.00px;top:550px;width:77.0px;height:13.0px;background:#ffffff"></div>
<div class="r" style="left:1394.00px;top:550px;width:77.0px;height:13.0px;background:#ffffff"></div>
<div class="r" style="left:525.00px;top:550px;width:77.0px;height:13.0px;background:#b9e4fa"></div>
<div class="r" style="left:1078.00px;top:550px;width:77.0px;height:13.0px;background:#b9e4fa"></div>
<div class="r" style="left:1236.00px;top:550px;width:77.0px;height:13.0px;background:#b9e4fa"></div>
<div class="r" style="left:1710.00px;top:550px;width:77.0px;height:13.0px;background:#b9e4fa"></div>
<div class="r" style="left:1157.00px;top:550px;width:77.0px;height:13.0px;background:linear-gradient(#f1f3f4,#bde3f8)"></div>
<div class="r" style="left:1315.00px;top:550px;width:77.0px;height:13.0px;background:linear-gradient(#f1f3f4,#bde3f8)"></div>
<div class="r" style="left:1473.00px;top:550px;width:77.0px;height:13.0px;background:linear-gradient(#f1f3f4,#bde3f8)"></div>
<div class="r" style="left:1552.00px;top:550px;width:77.0px;height:13.0px;background:linear-gradient(#f1f3f4,#bde3f8)"></div>
<div class="t" style="left:293.00px;top:550px">Renewal</div>
<div class="t rt" style="left:367.00px;top:550px;width:72.70px">23,400</div>
<div class="t rt" style="left:604.00px;top:550px;width:72.70px">23,400</div>
<div class="t" style="left:684.80px;top:550px">Miguel Parker</div>
<div class="t" style="left:767.00px;top:550px">Enterprise</div>
<div class="t rt" style="left:841.00px;top:550px;width:75.70px">Feb-28-2022</div>
<div class="t rt" style="left:920.00px;top:550px;width:75.70px">Apr-19-2022</div>
<div class="t rt" style="left:999.00px;top:550px;width:75.70px">Apr-18-2023</div>
<div class="t" style="left:1159.00px;top:550px">High</div>
<svg class="r" style="left:1179.00px;top:555.30px" width="4" height="3" viewBox="0 0 4 3"><polygon points="0,0 3.6,0 1.8,3" fill="#3a3a3a"/></svg>
<div class="t rt" style="left:1236.00px;top:550px;width:75.70px">Apr-18-2023</div>
<div class="t" style="left:1317.40px;top:550px">Y</div>
<svg class="r" style="left:1325.40px;top:555.30px" width="4" height="3" viewBox="0 0 4 3"><polygon points="0,0 3.6,0 1.8,3" fill="#3a3a3a"/></svg>
<div class="t rt" style="left:1394.00px;top:550px;width:75.80px">Apr-18-2023</div>
<svg class="r" style="left:1664.35px;top:550.5px" width="12" height="12" viewBox="0 0 12 12"><path d="M1.65 6.3 L4.75 9.6 L9.65 0.5" fill="none" stroke="#a9a9a9" stroke-width="1.3"/></svg>
<div class="r" style="left:1631.50px;top:564px;width:77.00px;height:1px;background:#d2d2d2"></div>
<div class="lid" style="left:30px;top:565px">CON-ID 383</div>
<div class="r" style="left:27.00px;top:579.00px;width:242.50px;height:1.00px;background:#d0d0d0;"></div>
<div class="r" style="left:288.00px;top:565px;width:77.0px;height:13.0px;background:#ffffff"></div>
<div class="r" style="left:367.00px;top:565px;width:77.0px;height:13.0px;background:#ffffff"></div>
<div class="r" style="left:446.00px;top:565px;width:77.0px;height:13.0px;background:#ffffff"></div>
<div class="r" style="left:604.00px;top:565px;width:77.0px;height:13.0px;background:#ffffff"></div>
<div class="r" style="left:683.00px;top:565px;width:77.0px;height:13.0px;background:#ffffff"></div>
<div class="r" style="left:762.00px;top:565px;width:77.0px;height:13.0px;background:#ffffff"></div>
<div class="r" style="left:841.00px;top:565px;width:77.0px;height:13.0px;background:#ffffff"></div>
<div class="r" style="left:920.00px;top:565px;width:77.0px;height:13.0px;background:#ffffff"></div>
<div class="r" style="left:999.00px;top:565px;width:77.0px;height:13.0px;background:#ffffff"></div>
<div class="r" style="left:1394.00px;top:565px;width:77.0px;height:13.0px;background:#ffffff"></div>
<div class="r" style="left:525.00px;top:565px;width:77.0px;height:13.0px;background:#b9e4fa"></div>
<div class="r" style="left:1078.00px;top:565px;width:77.0px;height:13.0px;background:#b9e4fa"></div>
<div class="r" style="left:1236.00px;top:565px;width:77.0px;height:13.0px;background:#b9e4fa"></div>
<div class="r" style="left:1710.00px;top:565px;width:77.0px;height:13.0px;background:#b9e4fa"></div>
<div class="r" style="left:1157.00px;top:565px;width:77.0px;height:13.0px;background:linear-gradient(#f1f3f4,#bde3f8)"></div>
<div class="r" style="left:1315.00px;top:565px;width:77.0px;height:13.0px;background:linear-gradient(#f1f3f4,#bde3f8)"></div>
<div class="r" style="left:1473.00px;top:565px;width:77.0px;height:13.0px;background:linear-gradient(#f1f3f4,#bde3f8)"></div>
<div class="r" style="left:1552.00px;top:565px;width:77.0px;height:13.0px;background:linear-gradient(#f1f3f4,#bde3f8)"></div>
<div class="t" style="left:293.00px;top:565px">New</div>
<div class="t rt" style="left:367.00px;top:565px;width:72.70px">156,000</div>
<div class="t rt" style="left:604.00px;top:565px;width:72.70px">156,000</div>
<div class="t" style="left:684.80px;top:565px">Kolten Esparza</div>
<div class="t" style="left:767.00px;top:565px">Client Sales</div>
<div class="t rt" style="left:841.00px;top:565px;width:75.70px">May-14-2022</div>
<div class="t rt" style="left:920.00px;top:565px;width:75.70px">Jul-2-2022</div>
<div class="t rt" style="left:999.00px;top:565px;width:75.70px">Jul-1-2023</div>
<div class="t" style="left:1317.40px;top:565px">Y</div>
<svg class="r" style="left:1325.40px;top:570.30px" width="4" height="3" viewBox="0 0 4 3"><polygon points="0,0 3.6,0 1.8,3" fill="#3a3a3a"/></svg>
<div class="t rt" style="left:1394.00px;top:565px;width:75.80px">Jul-1-2032</div>
<svg class="r" style="left:1664.35px;top:565.5px" width="12" height="12" viewBox="0 0 12 12"><path d="M1.65 6.3 L4.75 9.6 L9.65 0.5" fill="none" stroke="#a9a9a9" stroke-width="1.3"/></svg>
<div class="r" style="left:1631.50px;top:579px;width:77.00px;height:1px;background:#d2d2d2"></div>
<div class="lid" style="left:30px;top:580px">CON-ID 423</div>
<div class="r" style="left:27.00px;top:594.00px;width:242.50px;height:1.00px;background:#d0d0d0;"></div>
<div class="r" style="left:288.00px;top:580px;width:77.0px;height:13.0px;background:#ffffff"></div>
<div class="r" style="left:367.00px;top:580px;width:77.0px;height:13.0px;background:#ffffff"></div>
<div class="r" style="left:446.00px;top:580px;width:77.0px;height:13.0px;background:#ffffff"></div>
<div class="r" style="left:604.00px;top:580px;width:77.0px;height:13.0px;background:#ffffff"></div>
<div class="r" style="left:683.00px;top:580px;width:77.0px;height:13.0px;background:#ffffff"></div>
<div class="r" style="left:762.00px;top:580px;width:77.0px;height:13.0px;background:#ffffff"></div>
<div class="r" style="left:841.00px;top:580px;width:77.0px;height:13.0px;background:#ffffff"></div>
<div class="r" style="left:920.00px;top:580px;width:77.0px;height:13.0px;background:#ffffff"></div>
<div class="r" style="left:999.00px;top:580px;width:77.0px;height:13.0px;background:#ffffff"></div>
<div class="r" style="left:1394.00px;top:580px;width:77.0px;height:13.0px;background:#ffffff"></div>
<div class="r" style="left:525.00px;top:580px;width:77.0px;height:13.0px;background:#b9e4fa"></div>
<div class="r" style="left:1078.00px;top:580px;width:77.0px;height:13.0px;background:#b9e4fa"></div>
<div class="r" style="left:1236.00px;top:580px;width:77.0px;height:13.0px;background:#b9e4fa"></div>
<div class="r" style="left:1710.00px;top:580px;width:77.0px;height:13.0px;background:#b9e4fa"></div>
<div class="r" style="left:1157.00px;top:580px;width:77.0px;height:13.0px;background:linear-gradient(#f1f3f4,#bde3f8)"></div>
<div class="r" style="left:1315.00px;top:580px;width:77.0px;height:13.0px;background:linear-gradient(#f1f3f4,#bde3f8)"></div>
<div class="r" style="left:1473.00px;top:580px;width:77.0px;height:13.0px;background:linear-gradient(#f1f3f4,#bde3f8)"></div>
<div class="r" style="left:1552.00px;top:580px;width:77.0px;height:13.0px;background:linear-gradient(#f1f3f4,#bde3f8)"></div>
<div class="t" style="left:293.00px;top:580px">Expansion</div>
<div class="t rt" style="left:367.00px;top:580px;width:72.70px">29,900</div>
<div class="t rt" style="left:604.00px;top:580px;width:72.70px">29,900</div>
<div class="t" style="left:684.80px;top:580px">Omari Patterson</div>
<div class="t" style="left:767.00px;top:580px">Client Sales</div>
<div class="t rt" style="left:841.00px;top:580px;width:75.70px">Feb-10-2021</div>
<div class="t rt" style="left:920.00px;top:580px;width:75.70px">Apr-3-2021</div>
<div class="t rt" style="left:999.00px;top:580px;width:75.70px">Apr-2-2022</div>
<div class="t" style="left:1317.40px;top:580px">Y</div>
<svg class="r" style="left:1325.40px;top:585.30px" width="4" height="3" viewBox="0 0 4 3"><polygon points="0,0 3.6,0 1.8,3" fill="#3a3a3a"/></svg>
<div class="t rt" style="left:1394.00px;top:580px;width:75.80px">Apr-2-2031</div>
<svg class="r" style="left:1664.35px;top:580.5px" width="12" height="12" viewBox="0 0 12 12"><path d="M1.65 6.3 L4.75 9.6 L9.65 0.5" fill="none" stroke="#a9a9a9" stroke-width="1.3"/></svg>
<div class="r" style="left:1631.50px;top:594px;width:77.00px;height:1px;background:#d2d2d2"></div>
<div class="lid" style="left:30px;top:595px">CON-ID 387</div>
<div class="r" style="left:27.00px;top:609.00px;width:242.50px;height:1.00px;background:#d0d0d0;"></div>
<div class="r" style="left:288.00px;top:595px;width:77.0px;height:13.0px;background:#ffffff"></div>
<div class="r" style="left:367.00px;top:595px;width:77.0px;height:13.0px;background:#ffffff"></div>
<div class="r" style="left:446.00px;top:595px;width:77.0px;height:13.0px;background:#ffffff"></div>
<div class="r" style="left:604.00px;top:595px;width:77.0px;height:13.0px;background:#ffffff"></div>
<div class="r" style="left:683.00px;top:595px;width:77.0px;height:13.0px;background:#ffffff"></div>
<div class="r" style="left:762.00px;top:595px;width:77.0px;height:13.0px;background:#ffffff"></div>
<div class="r" style="left:841.00px;top:595px;width:77.0px;height:13.0px;background:#ffffff"></div>
<div class="r" style="left:920.00px;top:595px;width:77.0px;height:13.0px;background:#ffffff"></div>
<div class="r" style="left:999.00px;top:595px;width:77.0px;height:13.0px;background:#ffffff"></div>
<div class="r" style="left:1394.00px;top:595px;width:77.0px;height:13.0px;background:#ffffff"></div>
<div class="r" style="left:525.00px;top:595px;width:77.0px;height:13.0px;background:#b9e4fa"></div>
<div class="r" style="left:1078.00px;top:595px;width:77.0px;height:13.0px;background:#b9e4fa"></div>
<div class="r" style="left:1236.00px;top:595px;width:77.0px;height:13.0px;background:#b9e4fa"></div>
<div class="r" style="left:1710.00px;top:595px;width:77.0px;height:13.0px;background:#b9e4fa"></div>
<div class="r" style="left:1157.00px;top:595px;width:77.0px;height:13.0px;background:linear-gradient(#f1f3f4,#bde3f8)"></div>
<div class="r" style="left:1315.00px;top:595px;width:77.0px;height:13.0px;background:linear-gradient(#f1f3f4,#bde3f8)"></div>
<div class="r" style="left:1473.00px;top:595px;width:77.0px;height:13.0px;background:linear-gradient(#f1f3f4,#bde3f8)"></div>
<div class="r" style="left:1552.00px;top:595px;width:77.0px;height:13.0px;background:linear-gradient(#f1f3f4,#bde3f8)"></div>
<div class="t" style="left:293.00px;top:595px">Renewal</div>
<div class="t rt" style="left:367.00px;top:595px;width:72.70px">142,100</div>
<div class="t rt" style="left:604.00px;top:595px;width:72.70px">142,100</div>
<div class="t" style="left:684.80px;top:595px">Rogelio Hurley</div>
<div class="t" style="left:767.00px;top:595px">Enterprise</div>
<div class="t rt" style="left:841.00px;top:595px;width:75.70px">Feb-12-2021</div>
<div class="t rt" style="left:920.00px;top:595px;width:75.70px">Mar-2-2021</div>
<div class="t rt" style="left:999.00px;top:595px;width:75.70px">Mar-1-2022</div>
<div class="t" style="left:1317.40px;top:595px">Y</div>
<svg class="r" style="left:1325.40px;top:600.30px" width="4" height="3" viewBox="0 0 4 3"><polygon points="0,0 3.6,0 1.8,3" fill="#3a3a3a"/></svg>
<div class="t rt" style="left:1394.00px;top:595px;width:75.80px">Mar-1-2031</div>
<svg class="r" style="left:1664.35px;top:595.5px" width="12" height="12" viewBox="0 0 12 12"><path d="M1.65 6.3 L4.75 9.6 L9.65 0.5" fill="none" stroke="#a9a9a9" stroke-width="1.3"/></svg>
<div class="r" style="left:1631.50px;top:609px;width:77.00px;height:1px;background:#d2d2d2"></div>
<div class="lid" style="left:30px;top:610px">CON-ID 471</div>
<div class="r" style="left:27.00px;top:624.00px;width:242.50px;height:1.00px;background:#d0d0d0;"></div>
<div class="r" style="left:288.00px;top:610px;width:77.0px;height:13.0px;background:#ffffff"></div>
<div class="r" style="left:367.00px;top:610px;width:77.0px;height:13.0px;background:#ffffff"></div>
<div class="r" style="left:446.00px;top:610px;width:77.0px;height:13.0px;background:#ffffff"></div>
<div class="r" style="left:604.00px;top:610px;width:77.0px;height:13.0px;background:#ffffff"></div>
<div class="r" style="left:683.00px;top:610px;width:77.0px;height:13.0px;background:#ffffff"></div>
<div class="r" style="left:762.00px;top:610px;width:77.0px;height:13.0px;background:#ffffff"></div>
<div class="r" style="left:841.00px;top:610px;width:77.0px;height:13.0px;background:#ffffff"></div>
<div class="r" style="left:920.00px;top:610px;width:77.0px;height:13.0px;background:#ffffff"></div>
<div class="r" style="left:999.00px;top:610px;width:77.0px;height:13.0px;background:#ffffff"></div>
<div class="r" style="left:1394.00px;top:610px;width:77.0px;height:13.0px;background:#ffffff"></div>
<div class="r" style="left:525.00px;top:610px;width:77.0px;height:13.0px;background:#b9e4fa"></div>
<div class="r" style="left:1078.00px;top:610px;width:77.0px;height:13.0px;background:#b9e4fa"></div>
<div class="r" style="left:1236.00px;top:610px;width:77.0px;height:13.0px;background:#b9e4fa"></div>
<div class="r" style="left:1710.00px;top:610px;width:77.0px;height:13.0px;background:#b9e4fa"></div>
<div class="r" style="left:1157.00px;top:610px;width:77.0px;height:13.0px;background:linear-gradient(#f1f3f4,#bde3f8)"></div>
<div class="r" style="left:1315.00px;top:610px;width:77.0px;height:13.0px;background:linear-gradient(#f1f3f4,#bde3f8)"></div>
<div class="r" style="left:1473.00px;top:610px;width:77.0px;height:13.0px;background:linear-gradient(#f1f3f4,#bde3f8)"></div>
<div class="r" style="left:1552.00px;top:610px;width:77.0px;height:13.0px;background:linear-gradient(#f1f3f4,#bde3f8)"></div>
<div class="t" style="left:293.00px;top:610px">Renewal</div>
<div class="t rt" style="left:367.00px;top:610px;width:72.70px">83,500</div>
<div class="t rt" style="left:604.00px;top:610px;width:72.70px">83,500</div>
<div class="t" style="left:684.80px;top:610px">Alec Chambers</div>
<div class="t" style="left:767.00px;top:610px">Client Sales</div>
<div class="t rt" style="left:841.00px;top:610px;width:75.70px">Jul-18-2022</div>
<div class="t rt" style="left:920.00px;top:610px;width:75.70px">Jul-29-2022</div>
<div class="t rt" style="left:999.00px;top:610px;width:75.70px">Jul-28-2023</div>
<div class="t" style="left:1317.40px;top:610px">Y</div>
<svg class="r" style="left:1325.40px;top:615.30px" width="4" height="3" viewBox="0 0 4 3"><polygon points="0,0 3.6,0 1.8,3" fill="#3a3a3a"/></svg>
<div class="t rt" style="left:1394.00px;top:610px;width:75.80px">Jul-28-2032</div>
<svg class="r" style="left:1664.35px;top:610.5px" width="12" height="12" viewBox="0 0 12 12"><path d="M1.65 6.3 L4.75 9.6 L9.65 0.5" fill="none" stroke="#a9a9a9" stroke-width="1.3"/></svg>
<div class="r" style="left:1631.50px;top:624px;width:77.00px;height:1px;background:#d2d2d2"></div>
<div class="lid" style="left:30px;top:625px">CON-ID 453</div>
<div class="r" style="left:27.00px;top:639.00px;width:242.50px;height:1.00px;background:#d0d0d0;"></div>
<div class="r" style="left:288.00px;top:625px;width:77.0px;height:13.0px;background:#ffffff"></div>
<div class="r" style="left:367.00px;top:625px;width:77.0px;height:13.0px;background:#ffffff"></div>
<div class="r" style="left:446.00px;top:625px;width:77.0px;height:13.0px;background:#ffffff"></div>
<div class="r" style="left:604.00px;top:625px;width:77.0px;height:13.0px;background:#ffffff"></div>
<div class="r" style="left:683.00px;top:625px;width:77.0px;height:13.0px;background:#ffffff"></div>
<div class="r" style="left:762.00px;top:625px;width:77.0px;height:13.0px;background:#ffffff"></div>
<div class="r" style="left:841.00px;top:625px;width:77.0px;height:13.0px;background:#ffffff"></div>
<div class="r" style="left:920.00px;top:625px;width:77.0px;height:13.0px;background:#ffffff"></div>
<div class="r" style="left:999.00px;top:625px;width:77.0px;height:13.0px;background:#ffffff"></div>
<div class="r" style="left:1394.00px;top:625px;width:77.0px;height:13.0px;background:#ffffff"></div>
<div class="r" style="left:525.00px;top:625px;width:77.0px;height:13.0px;background:#b9e4fa"></div>
<div class="r" style="left:1078.00px;top:625px;width:77.0px;height:13.0px;background:#b9e4fa"></div>
<div class="r" style="left:1236.00px;top:625px;width:77.0px;height:13.0px;background:#b9e4fa"></div>
<div class="r" style="left:1710.00px;top:625px;width:77.0px;height:13.0px;background:#b9e4fa"></div>
<div class="r" style="left:1157.00px;top:625px;width:77.0px;height:13.0px;background:linear-gradient(#f1f3f4,#bde3f8)"></div>
<div class="r" style="left:1315.00px;top:625px;width:77.0px;height:13.0px;background:linear-gradient(#f1f3f4,#bde3f8)"></div>
<div class="r" style="left:1473.00px;top:625px;width:77.0px;height:13.0px;background:linear-gradient(#f1f3f4,#bde3f8)"></div>
<div class="r" style="left:1552.00px;top:625px;width:77.0px;height:13.0px;background:linear-gradient(#f1f3f4,#bde3f8)"></div>
<div class="t" style="left:293.00px;top:625px">New</div>
<div class="t rt" style="left:367.00px;top:625px;width:72.70px">126,700</div>
<div class="t rt" style="left:604.00px;top:625px;width:72.70px">126,700</div>
<div class="t" style="left:684.80px;top:625px">Heidi Marquez</div>
<div class="t" style="left:767.00px;top:625px">Client Sales</div>
<div class="t rt" style="left:841.00px;top:625px;width:75.70px">Oct-16-2021</div>
<div class="t rt" style="left:920.00px;top:625px;width:75.70px">Nov-27-2021</div>
<div class="t rt" style="left:999.00px;top:625px;width:75.70px">Nov-26-2022</div>
<div class="t" style="left:1317.40px;top:625px">Y</div>
<svg class="r" style="left:1325.40px;top:630.30px" width="4" height="3" viewBox="0 0 4 3"><polygon points="0,0 3.6,0 1.8,3" fill="#3a3a3a"/></svg>
<div class="t rt" style="left:1394.00px;top:625px;width:75.80px">Nov-26-2031</div>
<svg class="r" style="left:1664.35px;top:625.5px" width="12" height="12" viewBox="0 0 12 12"><path d="M1.65 6.3 L4.75 9.6 L9.65 0.5" fill="none" stroke="#a9a9a9" stroke-width="1.3"/></svg>
<div class="r" style="left:1631.50px;top:639px;width:77.00px;height:1px;background:#d2d2d2"></div>
<div class="lid" style="left:30px;top:640px">CON-ID 432</div>
<div class="r" style="left:27.00px;top:654.00px;width:242.50px;height:1.00px;background:#d0d0d0;"></div>
<div class="r" style="left:288.00px;top:640px;width:77.0px;height:13.0px;background:#ffffff"></div>
<div class="r" style="left:367.00px;top:640px;width:77.0px;height:13.0px;background:#ffffff"></div>
<div class="r" style="left:446.00px;top:640px;width:77.0px;height:13.0px;background:#ffffff"></div>
<div class="r" style="left:604.00px;top:640px;width:77.0px;height:13.0px;background:#ffffff"></div>
<div class="r" style="left:683.00px;top:640px;width:77.0px;height:13.0px;background:#ffffff"></div>
<div class="r" style="left:762.00px;top:640px;width:77.0px;height:13.0px;background:#ffffff"></div>
<div class="r" style="left:841.00px;top:640px;width:77.0px;height:13.0px;background:#ffffff"></div>
<div class="r" style="left:920.00px;top:640px;width:77.0px;height:13.0px;background:#ffffff"></div>
<div class="r" style="left:999.00px;top:640px;width:77.0px;height:13.0px;background:#ffffff"></div>
<div class="r" style="left:1394.00px;top:640px;width:77.0px;height:13.0px;background:#ffffff"></div>
<div class="r" style="left:525.00px;top:640px;width:77.0px;height:13.0px;background:#b9e4fa"></div>
<div class="r" style="left:1078.00px;top:640px;width:77.0px;height:13.0px;background:#b9e4fa"></div>
<div class="r" style="left:1236.00px;top:640px;width:77.0px;height:13.0px;background:#b9e4fa"></div>
<div class="r" style="left:1710.00px;top:640px;width:77.0px;height:13.0px;background:#b9e4fa"></div>
<div class="r" style="left:1157.00px;top:640px;width:77.0px;height:13.0px;background:linear-gradient(#f1f3f4,#bde3f8)"></div>
<div class="r" style="left:1315.00px;top:640px;width:77.0px;height:13.0px;background:linear-gradient(#f1f3f4,#bde3f8)"></div>
<div class="r" style="left:1473.00px;top:640px;width:77.0px;height:13.0px;background:linear-gradient(#f1f3f4,#bde3f8)"></div>
<div class="r" style="left:1552.00px;top:640px;width:77.0px;height:13.0px;background:linear-gradient(#f1f3f4,#bde3f8)"></div>
<div class="t" style="left:293.00px;top:640px">Renewal</div>
<div class="t rt" style="left:367.00px;top:640px;width:72.70px">62,500</div>
<div class="t rt" style="left:604.00px;top:640px;width:72.70px">62,500</div>
<div class="t" style="left:684.80px;top:640px">Karlee Hester</div>
<div class="t" style="left:767.00px;top:640px">Enterprise</div>
<div class="t rt" style="left:841.00px;top:640px;width:75.70px">May-5-2022</div>
<div class="t rt" style="left:920.00px;top:640px;width:75.70px">Jun-5-2022</div>
<div class="t rt" style="left:999.00px;top:640px;width:75.70px">Jun-4-2023</div>
<div class="t" style="left:1159.00px;top:640px">High</div>
<svg class="r" style="left:1179.00px;top:645.30px" width="4" height="3" viewBox="0 0 4 3"><polygon points="0,0 3.6,0 1.8,3" fill="#3a3a3a"/></svg>
<div class="t rt" style="left:1236.00px;top:640px;width:75.70px">Jun-4-2023</div>
<div class="t" style="left:1317.40px;top:640px">Y</div>
<svg class="r" style="left:1325.40px;top:645.30px" width="4" height="3" viewBox="0 0 4 3"><polygon points="0,0 3.6,0 1.8,3" fill="#3a3a3a"/></svg>
<div class="t rt" style="left:1394.00px;top:640px;width:75.80px">Jun-4-2023</div>
<svg class="r" style="left:1664.35px;top:640.5px" width="12" height="12" viewBox="0 0 12 12"><path d="M1.65 6.3 L4.75 9.6 L9.65 0.5" fill="none" stroke="#a9a9a9" stroke-width="1.3"/></svg>
<div class="r" style="left:1631.50px;top:654px;width:77.00px;height:1px;background:#d2d2d2"></div>
<div class="lid" style="left:30px;top:655px">CON-ID 286</div>
<div class="r" style="left:27.00px;top:669.00px;width:242.50px;height:1.00px;background:#d0d0d0;"></div>
<div class="r" style="left:288.00px;top:655px;width:77.0px;height:13.0px;background:#ffffff"></div>
<div class="r" style="left:367.00px;top:655px;width:77.0px;height:13.0px;background:#ffffff"></div>
<div class="r" style="left:446.00px;top:655px;width:77.0px;height:13.0px;background:#ffffff"></div>
<div class="r" style="left:604.00px;top:655px;width:77.0px;height:13.0px;background:#ffffff"></div>
<div class="r" style="left:683.00px;top:655px;width:77.0px;height:13.0px;background:#ffffff"></div>
<div class="r" style="left:762.00px;top:655px;width:77.0px;height:13.0px;background:#ffffff"></div>
<div class="r" style="left:841.00px;top:655px;width:77.0px;height:13.0px;background:#ffffff"></div>
<div class="r" style="left:920.00px;top:655px;width:77.0px;height:13.0px;background:#ffffff"></div>
<div class="r" style="left:999.00px;top:655px;width:77.0px;height:13.0px;background:#ffffff"></div>
<div class="r" style="left:1394.00px;top:655px;width:77.0px;height:13.0px;background:#ffffff"></div>
<div class="r" style="left:525.00px;top:655px;width:77.0px;height:13.0px;background:#b9e4fa"></div>
<div class="r" style="left:1078.00px;top:655px;width:77.0px;height:13.0px;background:#b9e4fa"></div>
<div class="r" style="left:1236.00px;top:655px;width:77.0px;height:13.0px;background:#b9e4fa"></div>
<div class="r" style="left:1710.00px;top:655px;width:77.0px;height:13.0px;background:#b9e4fa"></div>
<div class="r" style="left:1157.00px;top:655px;width:77.0px;height:13.0px;background:linear-gradient(#f1f3f4,#bde3f8)"></div>
<div class="r" style="left:1315.00px;top:655px;width:77.0px;height:13.0px;background:linear-gradient(#f1f3f4,#bde3f8)"></div>
<div class="r" style="left:1473.00px;top:655px;width:77.0px;height:13.0px;background:linear-gradient(#f1f3f4,#bde3f8)"></div>
<div class="r" style="left:1552.00px;top:655px;width:77.0px;height:13.0px;background:linear-gradient(#f1f3f4,#bde3f8)"></div>
<div class="t" style="left:293.00px;top:655px">Renewal</div>
<div class="t rt" style="left:367.00px;top:655px;width:72.70px">206,100</div>
<div class="t rt" style="left:604.00px;top:655px;width:72.70px">206,100</div>
<div class="t" style="left:684.80px;top:655px">Kody Mcguire</div>
<div class="t" style="left:767.00px;top:655px">CSM</div>
<div class="t rt" style="left:841.00px;top:655px;width:75.70px">May-25-2020</div>
<div class="t rt" style="left:920.00px;top:655px;width:75.70px">Jun-27-2020</div>
<div class="t rt" style="left:999.00px;top:655px;width:75.70px">Jun-26-2021</div>
<div class="t" style="left:1317.40px;top:655px">Y</div>
<svg class="r" style="left:1325.40px;top:660.30px" width="4" height="3" viewBox="0 0 4 3"><polygon points="0,0 3.6,0 1.8,3" fill="#3a3a3a"/></svg>
<div class="t rt" style="left:1394.00px;top:655px;width:75.80px">Jun-26-2030</div>
<svg class="r" style="left:1664.35px;top:655.5px" width="12" height="12" viewBox="0 0 12 12"><path d="M1.65 6.3 L4.75 9.6 L9.65 0.5" fill="none" stroke="#a9a9a9" stroke-width="1.3"/></svg>
<div class="r" style="left:1631.50px;top:669px;width:77.00px;height:1px;background:#d2d2d2"></div>
<div class="r" style="left:602px;top:398px;width:82px;height:17.5px;border:2px solid #10693b"></div>
<div class="r" style="left:678.80px;top:410.80px;width:7.40px;height:7.40px;background:#ffffff;"></div>
<div class="r" style="left:680.00px;top:412.00px;width:6.00px;height:6.00px;background:#16703f;"></div>
<div class="r" style="left:8.00px;top:684.00px;width:261.00px;height:19.00px;background:#d9d9d9;"></div>
<div class="r" style="left:279.00px;top:684.00px;width:1511.00px;height:19.00px;background:#d9d9d9;"></div>
<div class="r" style="left:11.3px;top:688px;font-size:9.8px;line-height:13px;font-weight:bold;color:#3f3f3f;white-space:nowrap;letter-spacing:.12px">Pipeline from CRM</div>
<div class="r" style="left:285px;top:690px;width:8px;height:8px;border:1px solid #8a8a8a"></div>
<div class="r" style="left:296.3px;top:687.1px;font-size:9.6px;line-height:13px;font-weight:bold;color:#6f6b68;-webkit-text-stroke:.2px #6f6b68;white-space:nowrap;transform:scaleX(.8);transform-origin:0 0">Details Synced from CRM</div>
<div class="lid" style="left:30px;top:705px;transform:scaleX(.93)">0118O10119EZVQT</div>
<div class="r" style="left:27.00px;top:719.00px;width:242.50px;height:1.00px;background:#d0d0d0;"></div>
<div class="r" style="left:288.00px;top:705px;width:77.0px;height:13.0px;background:#ffffff"></div>
<div class="r" style="left:367.00px;top:705px;width:77.0px;height:13.0px;background:#ffffff"></div>
<div class="r" style="left:446.00px;top:705px;width:77.0px;height:13.0px;background:#ffffff"></div>
<div class="r" style="left:604.00px;top:705px;width:77.0px;height:13.0px;background:#ffffff"></div>
<div class="r" style="left:683.00px;top:705px;width:77.0px;height:13.0px;background:#ffffff"></div>
<div class="r" style="left:762.00px;top:705px;width:77.0px;height:13.0px;background:#ffffff"></div>
<div class="r" style="left:1394.00px;top:705px;width:77.0px;height:13.0px;background:#ffffff"></div>
<div class="r" style="left:525.00px;top:705px;width:77.0px;height:13.0px;background:#b9e4fa"></div>
<div class="r" style="left:841.00px;top:705px;width:77.0px;height:13.0px;background:#b9e4fa"></div>
<div class="r" style="left:920.00px;top:705px;width:77.0px;height:13.0px;background:#b9e4fa"></div>
<div class="r" style="left:999.00px;top:705px;width:77.0px;height:13.0px;background:#b9e4fa"></div>
<div class="r" style="left:1078.00px;top:705px;width:77.0px;height:13.0px;background:#b9e4fa"></div>
<div class="r" style="left:1710.00px;top:705px;width:77.0px;height:13.0px;background:#b9e4fa"></div>
<div class="r" style="left:1315.00px;top:705px;width:77.0px;height:13.0px;background:linear-gradient(#f1f3f4,#bde3f8)"></div>
<div class="r" style="left:1473.00px;top:705px;width:77.0px;height:13.0px;background:linear-gradient(#f1f3f4,#bde3f8)"></div>
<div class="r" style="left:1552.00px;top:705px;width:77.0px;height:13.0px;background:linear-gradient(#f1f3f4,#bde3f8)"></div>
<div class="t" style="left:293.00px;top:705px">Expansion</div>
<div class="t rt" style="left:367.00px;top:705px;width:72.70px">150,000</div>
<div class="t rt" style="left:604.00px;top:705px;width:72.70px">150,000</div>
<div class="t" style="left:684.80px;top:705px">Karli Allison</div>
<div class="t" style="left:767.00px;top:705px">Client Sales</div>
<div class="t rt" style="left:841.00px;top:705px;width:75.70px">Nov-4-2023</div>
<div class="t rt" style="left:920.00px;top:705px;width:75.70px">Dec-1-2023</div>
<div class="t rt" style="left:999.00px;top:705px;width:75.70px">Nov-30-2024</div>
<div class="t" style="left:1317.40px;top:705px">Y</div>
<svg class="r" style="left:1325.40px;top:710.30px" width="4" height="3" viewBox="0 0 4 3"><polygon points="0,0 3.6,0 1.8,3" fill="#3a3a3a"/></svg>
<div class="t rt" style="left:1394.00px;top:705px;width:75.80px">Nov-30-2033</div>
<div class="lid" style="left:30px;top:720px;transform:scaleX(.93)">0124O10125CQAYC</div>
<div class="r" style="left:27.00px;top:734.00px;width:242.50px;height:1.00px;background:#d0d0d0;"></div>
<div class="r" style="left:288.00px;top:720px;width:77.0px;height:13.0px;background:#ffffff"></div>
<div class="r" style="left:367.00px;top:720px;width:77.0px;height:13.0px;background:#ffffff"></div>
<div class="r" style="left:446.00px;top:720px;width:77.0px;height:13.0px;background:#ffffff"></div>
<div class="r" style="left:604.00px;top:720px;width:77.0px;height:13.0px;background:#ffffff"></div>
<div class="r" style="left:683.00px;top:720px;width:77.0px;height:13.0px;background:#ffffff"></div>
<div class="r" style="left:762.00px;top:720px;width:77.0px;height:13.0px;background:#ffffff"></div>
<div class="r" style="left:1394.00px;top:720px;width:77.0px;height:13.0px;background:#ffffff"></div>
<div class="r" style="left:525.00px;top:720px;width:77.0px;height:13.0px;background:#b9e4fa"></div>
<div class="r" style="left:841.00px;top:720px;width:77.0px;height:13.0px;background:#b9e4fa"></div>
<div class="r" style="left:920.00px;top:720px;width:77.0px;height:13.0px;background:#b9e4fa"></div>
<div class="r" style="left:999.00px;top:720px;width:77.0px;height:13.0px;background:#b9e4fa"></div>
<div class="r" style="left:1078.00px;top:720px;width:77.0px;height:13.0px;background:#b9e4fa"></div>
<div class="r" style="left:1710.00px;top:720px;width:77.0px;height:13.0px;background:#b9e4fa"></div>
<div class="r" style="left:1315.00px;top:720px;width:77.0px;height:13.0px;background:linear-gradient(#f1f3f4,#bde3f8)"></div>
<div class="r" style="left:1473.00px;top:720px;width:77.0px;height:13.0px;background:linear-gradient(#f1f3f4,#bde3f8)"></div>
<div class="r" style="left:1552.00px;top:720px;width:77.0px;height:13.0px;background:linear-gradient(#f1f3f4,#bde3f8)"></div>
<div class="t" style="left:293.00px;top:720px">New</div>
<div class="t rt" style="left:367.00px;top:720px;width:72.70px">348,000</div>
<div class="t rt" style="left:604.00px;top:720px;width:72.70px">348,000</div>
<div class="t" style="left:684.80px;top:720px">Talan Lloyd</div>
<div class="t" style="left:767.00px;top:720px">Client Sales</div>
<div class="t rt" style="left:841.00px;top:720px;width:75.70px">May-24-2023</div>
<div class="t rt" style="left:920.00px;top:720px;width:75.70px">Jun-1-2023</div>
<div class="t rt" style="left:999.00px;top:720px;width:75.70px">May-31-2024</div>
<div class="t" style="left:1317.40px;top:720px">Y</div>
<svg class="r" style="left:1325.40px;top:725.30px" width="4" height="3" viewBox="0 0 4 3"><polygon points="0,0 3.6,0 1.8,3" fill="#3a3a3a"/></svg>
<div class="t rt" style="left:1394.00px;top:720px;width:75.80px">May-31-2033</div>
<div class="lid" style="left:30px;top:735px;transform:scaleX(.93)">0133O10134SLVVG</div>
<div class="r" style="left:27.00px;top:749.00px;width:242.50px;height:1.00px;background:#d0d0d0;"></div>
<div class="r" style="left:288.00px;top:735px;width:77.0px;height:13.0px;background:#ffffff"></div>
<div class="r" style="left:367.00px;top:735px;width:77.0px;height:13.0px;background:#ffffff"></div>
<div class="r" style="left:446.00px;top:735px;width:77.0px;height:13.0px;background:#ffffff"></div>
<div class="r" style="left:604.00px;top:735px;width:77.0px;height:13.0px;background:#ffffff"></div>
<div class="r" style="left:683.00px;top:735px;width:77.0px;height:13.0px;background:#ffffff"></div>
<div class="r" style="left:762.00px;top:735px;width:77.0px;height:13.0px;background:#ffffff"></div>
<div class="r" style="left:1394.00px;top:735px;width:77.0px;height:13.0px;background:#ffffff"></div>
<div class="r" style="left:525.00px;top:735px;width:77.0px;height:13.0px;background:#b9e4fa"></div>
<div class="r" style="left:841.00px;top:735px;width:77.0px;height:13.0px;background:#b9e4fa"></div>
<div class="r" style="left:920.00px;top:735px;width:77.0px;height:13.0px;background:#b9e4fa"></div>
<div class="r" style="left:999.00px;top:735px;width:77.0px;height:13.0px;background:#b9e4fa"></div>
<div class="r" style="left:1078.00px;top:735px;width:77.0px;height:13.0px;background:#b9e4fa"></div>
<div class="r" style="left:1710.00px;top:735px;width:77.0px;height:13.0px;background:#b9e4fa"></div>
<div class="r" style="left:1315.00px;top:735px;width:77.0px;height:13.0px;background:linear-gradient(#f1f3f4,#bde3f8)"></div>
<div class="r" style="left:1473.00px;top:735px;width:77.0px;height:13.0px;background:linear-gradient(#f1f3f4,#bde3f8)"></div>
<div class="r" style="left:1552.00px;top:735px;width:77.0px;height:13.0px;background:linear-gradient(#f1f3f4,#bde3f8)"></div>
<div class="t" style="left:293.00px;top:735px">New</div>
<div class="t rt" style="left:367.00px;top:735px;width:72.70px">90,000</div>
<div class="t rt" style="left:604.00px;top:735px;width:72.70px">90,000</div>
<div class="t" style="left:684.80px;top:735px">Kaitlynn Forbes</div>
<div class="t" style="left:767.00px;top:735px">VP Growth</div>
<div class="t rt" style="left:841.00px;top:735px;width:75.70px">Dec-26-2023</div>
<div class="t rt" style="left:920.00px;top:735px;width:75.70px">Jan-1-2024</div>
<div class="t rt" style="left:999.00px;top:735px;width:75.70px">Dec-31-2024</div>
<div class="t" style="left:1317.40px;top:735px">Y</div>
<svg class="r" style="left:1325.40px;top:740.30px" width="4" height="3" viewBox="0 0 4 3"><polygon points="0,0 3.6,0 1.8,3" fill="#3a3a3a"/></svg>
<div class="t rt" style="left:1394.00px;top:735px;width:75.80px">Dec-31-2033</div>
<div class="lid" style="left:30px;top:750px;transform:scaleX(.93)">0147O10148EKBNF</div>
<div class="r" style="left:27.00px;top:764.00px;width:242.50px;height:1.00px;background:#d0d0d0;"></div>
<div class="r" style="left:288.00px;top:750px;width:77.0px;height:13.0px;background:#ffffff"></div>
<div class="r" style="left:367.00px;top:750px;width:77.0px;height:13.0px;background:#ffffff"></div>
<div class="r" style="left:446.00px;top:750px;width:77.0px;height:13.0px;background:#ffffff"></div>
<div class="r" style="left:604.00px;top:750px;width:77.0px;height:13.0px;background:#ffffff"></div>
<div class="r" style="left:683.00px;top:750px;width:77.0px;height:13.0px;background:#ffffff"></div>
<div class="r" style="left:762.00px;top:750px;width:77.0px;height:13.0px;background:#ffffff"></div>
<div class="r" style="left:1394.00px;top:750px;width:77.0px;height:13.0px;background:#ffffff"></div>
<div class="r" style="left:525.00px;top:750px;width:77.0px;height:13.0px;background:#b9e4fa"></div>
<div class="r" style="left:841.00px;top:750px;width:77.0px;height:13.0px;background:#b9e4fa"></div>
<div class="r" style="left:920.00px;top:750px;width:77.0px;height:13.0px;background:#b9e4fa"></div>
<div class="r" style="left:999.00px;top:750px;width:77.0px;height:13.0px;background:#b9e4fa"></div>
<div class="r" style="left:1078.00px;top:750px;width:77.0px;height:13.0px;background:#b9e4fa"></div>
<div class="r" style="left:1710.00px;top:750px;width:77.0px;height:13.0px;background:#b9e4fa"></div>
<div class="r" style="left:1315.00px;top:750px;width:77.0px;height:13.0px;background:linear-gradient(#f1f3f4,#bde3f8)"></div>
<div class="r" style="left:1473.00px;top:750px;width:77.0px;height:13.0px;background:linear-gradient(#f1f3f4,#bde3f8)"></div>
<div class="r" style="left:1552.00px;top:750px;width:77.0px;height:13.0px;background:linear-gradient(#f1f3f4,#bde3f8)"></div>
<div class="t" style="left:293.00px;top:750px">Expansion</div>
<div class="t rt" style="left:367.00px;top:750px;width:72.70px">329,000</div>
<div class="t rt" style="left:604.00px;top:750px;width:72.70px">329,000</div>
<div class="t" style="left:684.80px;top:750px">Ethen French</div>
<div class="t" style="left:767.00px;top:750px">VP Growth</div>
<div class="t rt" style="left:841.00px;top:750px;width:75.70px">Dec-11-2022</div>
<div class="t rt" style="left:920.00px;top:750px;width:75.70px">Jan-1-2023</div>
<div class="t rt" style="left:999.00px;top:750px;width:75.70px">Dec-31-2023</div>
<div class="t" style="left:1317.40px;top:750px">Y</div>
<svg class="r" style="left:1325.40px;top:755.30px" width="4" height="3" viewBox="0 0 4 3"><polygon points="0,0 3.6,0 1.8,3" fill="#3a3a3a"/></svg>
<div class="t rt" style="left:1394.00px;top:750px;width:75.80px">Dec-31-2032</div>
<div class="lid" style="left:30px;top:765px;transform:scaleX(.93)">0152O10153UYUPQ</div>
<div class="r" style="left:27.00px;top:779.00px;width:242.50px;height:1.00px;background:#d0d0d0;"></div>
<div class="r" style="left:288.00px;top:765px;width:77.0px;height:13.0px;background:#ffffff"></div>
<div class="r" style="left:367.00px;top:765px;width:77.0px;height:13.0px;background:#ffffff"></div>
<div class="r" style="left:446.00px;top:765px;width:77.0px;height:13.0px;background:#ffffff"></div>
<div class="r" style="left:604.00px;top:765px;width:77.0px;height:13.0px;background:#ffffff"></div>
<div class="r" style="left:683.00px;top:765px;width:77.0px;height:13.0px;background:#ffffff"></div>
<div class="r" style="left:762.00px;top:765px;width:77.0px;height:13.0px;background:#ffffff"></div>
<div class="r" style="left:1394.00px;top:765px;width:77.0px;height:13.0px;background:#ffffff"></div>
<div class="r" style="left:525.00px;top:765px;width:77.0px;height:13.0px;background:#b9e4fa"></div>
<div class="r" style="left:841.00px;top:765px;width:77.0px;height:13.0px;background:#b9e4fa"></div>
<div class="r" style="left:920.00px;top:765px;width:77.0px;height:13.0px;background:#b9e4fa"></div>
<div class="r" style="left:999.00px;top:765px;width:77.0px;height:13.0px;background:#b9e4fa"></div>
<div class="r" style="left:1078.00px;top:765px;width:77.0px;height:13.0px;background:#b9e4fa"></div>
<div class="r" style="left:1710.00px;top:765px;width:77.0px;height:13.0px;background:#b9e4fa"></div>
<div class="r" style="left:1315.00px;top:765px;width:77.0px;height:13.0px;background:linear-gradient(#f1f3f4,#bde3f8)"></div>
<div class="r" style="left:1473.00px;top:765px;width:77.0px;height:13.0px;background:linear-gradient(#f1f3f4,#bde3f8)"></div>
<div class="r" style="left:1552.00px;top:765px;width:77.0px;height:13.0px;background:linear-gradient(#f1f3f4,#bde3f8)"></div>
<div class="t" style="left:293.00px;top:765px">New</div>
<div class="t rt" style="left:367.00px;top:765px;width:72.70px">65,000</div>
<div class="t rt" style="left:604.00px;top:765px;width:72.70px">65,000</div>
<div class="t" style="left:684.80px;top:765px">Messiah Stafford</div>
<div class="t" style="left:767.00px;top:765px">CSM</div>
<div class="t rt" style="left:841.00px;top:765px;width:75.70px">Mar-13-2023</div>
<div class="t rt" style="left:920.00px;top:765px;width:75.70px">Apr-1-2023</div>
<div class="t rt" style="left:999.00px;top:765px;width:75.70px">Mar-31-2024</div>
<div class="t" style="left:1317.40px;top:765px">Y</div>
<svg class="r" style="left:1325.40px;top:770.30px" width="4" height="3" viewBox="0 0 4 3"><polygon points="0,0 3.6,0 1.8,3" fill="#3a3a3a"/></svg>
<div class="t rt" style="left:1394.00px;top:765px;width:75.80px">Mar-31-2033</div>
<div class="lid" style="left:30px;top:780px;transform:scaleX(.93)">0153O10154YPHTM</div>
<div class="r" style="left:27.00px;top:794.00px;width:242.50px;height:1.00px;background:#d0d0d0;"></div>
<div class="r" style="left:288.00px;top:780px;width:77.0px;height:13.0px;background:#ffffff"></div>
<div class="r" style="left:367.00px;top:780px;width:77.0px;height:13.0px;background:#ffffff"></div>
<div class="r" style="left:446.00px;top:780px;width:77.0px;height:13.0px;background:#ffffff"></div>
<div class="r" style="left:604.00px;top:780px;width:77.0px;height:13.0px;background:#ffffff"></div>
<div class="r" style="left:683.00px;top:780px;width:77.0px;height:13.0px;background:#ffffff"></div>
<div class="r" style="left:762.00px;top:780px;width:77.0px;height:13.0px;background:#ffffff"></div>
<div class="r" style="left:1394.00px;top:780px;width:77.0px;height:13.0px;background:#ffffff"></div>
<div class="r" style="left:525.00px;top:780px;width:77.0px;height:13.0px;background:#b9e4fa"></div>
<div class="r" style="left:841.00px;top:780px;width:77.0px;height:13.0px;background:#b9e4fa"></div>
<div class="r" style="left:920.00px;top:780px;width:77.0px;height:13.0px;background:#b9e4fa"></div>
<div class="r" style="left:999.00px;top:780px;width:77.0px;height:13.0px;background:#b9e4fa"></div>
<div class="r" style="left:1078.00px;top:780px;width:77.0px;height:13.0px;background:#b9e4fa"></div>
<div class="r" style="left:1710.00px;top:780px;width:77.0px;height:13.0px;background:#b9e4fa"></div>
<div class="r" style="left:1315.00px;top:780px;width:77.0px;height:13.0px;background:linear-gradient(#f1f3f4,#bde3f8)"></div>
<div class="r" style="left:1473.00px;top:780px;width:77.0px;height:13.0px;background:linear-gradient(#f1f3f4,#bde3f8)"></div>
<div class="r" style="left:1552.00px;top:780px;width:77.0px;height:13.0px;background:linear-gradient(#f1f3f4,#bde3f8)"></div>
<div class="t" style="left:293.00px;top:780px">New</div>
<div class="t rt" style="left:367.00px;top:780px;width:72.70px">233,000</div>
<div class="t rt" style="left:604.00px;top:780px;width:72.70px">233,000</div>
<div class="t" style="left:684.80px;top:780px">Logan Shepard</div>
<div class="t" style="left:767.00px;top:780px">Enterprise</div>
<div class="t rt" style="left:841.00px;top:780px;width:75.70px">Dec-31-2022</div>
<div class="t rt" style="left:920.00px;top:780px;width:75.70px">Jan-1-2023</div>
<div class="t rt" style="left:999.00px;top:780px;width:75.70px">Dec-31-2023</div>
<div class="t" style="left:1317.40px;top:780px">Y</div>
<svg class="r" style="left:1325.40px;top:785.30px" width="4" height="3" viewBox="0 0 4 3"><polygon points="0,0 3.6,0 1.8,3" fill="#3a3a3a"/></svg>
<div class="t rt" style="left:1394.00px;top:780px;width:75.80px">Dec-31-2032</div>
<div class="lid" style="left:30px;top:795px;transform:scaleX(.93)">0157O10158FZVHF</div>
<div class="r" style="left:27.00px;top:809.00px;width:242.50px;height:1.00px;background:#d0d0d0;"></div>
<div class="r" style="left:288.00px;top:795px;width:77.0px;height:13.0px;background:#ffffff"></div>
<div class="r" style="left:367.00px;top:795px;width:77.0px;height:13.0px;background:#ffffff"></div>
<div class="r" style="left:446.00px;top:795px;width:77.0px;height:13.0px;background:#ffffff"></div>
<div class="r" style="left:604.00px;top:795px;width:77.0px;height:13.0px;background:#ffffff"></div>
<div class="r" style="left:683.00px;top:795px;width:77.0px;height:13.0px;background:#ffffff"></div>
<div class="r" style="left:762.00px;top:795px;width:77.0px;height:13.0px;background:#ffffff"></div>
<div class="r" style="left:1394.00px;top:795px;width:77.0px;height:13.0px;background:#ffffff"></div>
<div class="r" style="left:525.00px;top:795px;width:77.0px;height:13.0px;background:#b9e4fa"></div>
<div class="r" style="left:841.00px;top:795px;width:77.0px;height:13.0px;background:#b9e4fa"></div>
<div class="r" style="left:920.00px;top:795px;width:77.0px;height:13.0px;background:#b9e4fa"></div>
<div class="r" style="left:999.00px;top:795px;width:77.0px;height:13.0px;background:#b9e4fa"></div>
<div class="r" style="left:1078.00px;top:795px;width:77.0px;height:13.0px;background:#b9e4fa"></div>
<div class="r" style="left:1710.00px;top:795px;width:77.0px;height:13.0px;background:#b9e4fa"></div>
<div class="r" style="left:1315.00px;top:795px;width:77.0px;height:13.0px;background:linear-gradient(#f1f3f4,#bde3f8)"></div>
<div class="r" style="left:1473.00px;top:795px;width:77.0px;height:13.0px;background:linear-gradient(#f1f3f4,#bde3f8)"></div>
<div class="r" style="left:1552.00px;top:795px;width:77.0px;height:13.0px;background:linear-gradient(#f1f3f4,#bde3f8)"></div>
<div class="t" style="left:293.00px;top:795px">New</div>
<div class="t rt" style="left:367.00px;top:795px;width:72.70px">191,000</div>
<div class="t rt" style="left:604.00px;top:795px;width:72.70px">191,000</div>
<div class="t" style="left:684.80px;top:795px">Aaden Frazier</div>
<div class="t" style="left:767.00px;top:795px">VP Growth</div>
<div class="t rt" style="left:841.00px;top:795px;width:75.70px">May-27-2023</div>
<div class="t rt" style="left:920.00px;top:795px;width:75.70px">Jun-1-2023</div>
<div class="t rt" style="left:999.00px;top:795px;width:75.70px">May-31-2024</div>
<div class="t" style="left:1317.40px;top:795px">Y</div>
<svg class="r" style="left:1325.40px;top:800.30px" width="4" height="3" viewBox="0 0 4 3"><polygon points="0,0 3.6,0 1.8,3" fill="#3a3a3a"/></svg>
<div class="t rt" style="left:1394.00px;top:795px;width:75.80px">May-31-2033</div>
<div class="lid" style="left:30px;top:810px;transform:scaleX(.93)">0163O10164JINMR</div>
<div class="r" style="left:27.00px;top:824.00px;width:242.50px;height:1.00px;background:#d0d0d0;"></div>
<div class="r" style="left:288.00px;top:810px;width:77.0px;height:13.0px;background:#ffffff"></div>
<div class="r" style="left:367.00px;top:810px;width:77.0px;height:13.0px;background:#ffffff"></div>
<div class="r" style="left:446.00px;top:810px;width:77.0px;height:13.0px;background:#ffffff"></div>
<div class="r" style="left:604.00px;top:810px;width:77.0px;height:13.0px;background:#ffffff"></div>
<div class="r" style="left:683.00px;top:810px;width:77.0px;height:13.0px;background:#ffffff"></div>
<div class="r" style="left:762.00px;top:810px;width:77.0px;height:13.0px;background:#ffffff"></div>
<div class="r" style="left:1394.00px;top:810px;width:77.0px;height:13.0px;background:#ffffff"></div>
<div class="r" style="left:525.00px;top:810px;width:77.0px;height:13.0px;background:#b9e4fa"></div>
<div class="r" style="left:841.00px;top:810px;width:77.0px;height:13.0px;background:#b9e4fa"></div>
<div class="r" style="left:920.00px;top:810px;width:77.0px;height:13.0px;background:#b9e4fa"></div>
<div class="r" style="left:999.00px;top:810px;width:77.0px;height:13.0px;background:#b9e4fa"></div>
<div class="r" style="left:1078.00px;top:810px;width:77.0px;height:13.0px;background:#b9e4fa"></div>
<div class="r" style="left:1710.00px;top:810px;width:77.0px;height:13.0px;background:#b9e4fa"></div>
<div class="r" style="left:1315.00px;top:810px;width:77.0px;height:13.0px;background:linear-gradient(#f1f3f4,#bde3f8)"></div>
<div class="r" style="left:1473.00px;top:810px;width:77.0px;height:13.0px;background:linear-gradient(#f1f3f4,#bde3f8)"></div>
<div class="r" style="left:1552.00px;top:810px;width:77.0px;height:13.0px;background:linear-gradient(#f1f3f4,#bde3f8)"></div>
<div class="t" style="left:293.00px;top:810px">New</div>
<div class="t rt" style="left:367.00px;top:810px;width:72.70px">129,000</div>
<div class="t rt" style="left:604.00px;top:810px;width:72.70px">129,000</div>
<div class="t" style="left:684.80px;top:810px">Emily Powers</div>
<div class="t" style="left:767.00px;top:810px">VP Growth</div>
<div class="t rt" style="left:841.00px;top:810px;width:75.70px">Sep-14-2023</div>
<div class="t rt" style="left:920.00px;top:810px;width:75.70px">Oct-1-2023</div>
<div class="t rt" style="left:999.00px;top:810px;width:75.70px">Sep-30-2024</div>
<div class="t" style="left:1317.40px;top:810px">Y</div>
<svg class="r" style="left:1325.40px;top:815.30px" width="4" height="3" viewBox="0 0 4 3"><polygon points="0,0 3.6,0 1.8,3" fill="#3a3a3a"/></svg>
<div class="t rt" style="left:1394.00px;top:810px;width:75.80px">Sep-30-2033</div>
<div class="lid" style="left:30px;top:825px;transform:scaleX(.93)">0164O10165TQOTB</div>
<div class="r" style="left:27.00px;top:839.00px;width:242.50px;height:1.00px;background:#d0d0d0;"></div>
<div class="r" style="left:288.00px;top:825px;width:77.0px;height:13.0px;background:#ffffff"></div>
<div class="r" style="left:367.00px;top:825px;width:77.0px;height:13.0px;background:#ffffff"></div>
<div class="r" style="left:446.00px;top:825px;width:77.0px;height:13.0px;background:#ffffff"></div>
<div class="r" style="left:604.00px;top:825px;width:77.0px;height:13.0px;background:#ffffff"></div>
<div class="r" style="left:683.00px;top:825px;width:77.0px;height:13.0px;background:#ffffff"></div>
<div class="r" style="left:762.00px;top:825px;width:77.0px;height:13.0px;background:#ffffff"></div>
<div class="r" style="left:1394.00px;top:825px;width:77.0px;height:13.0px;background:#ffffff"></div>
<div class="r" style="left:525.00px;top:825px;width:77.0px;height:13.0px;background:#b9e4fa"></div>
<div class="r" style="left:841.00px;top:825px;width:77.0px;height:13.0px;background:#b9e4fa"></div>
<div class="r" style="left:920.00px;top:825px;width:77.0px;height:13.0px;background:#b9e4fa"></div>
<div class="r" style="left:999.00px;top:825px;width:77.0px;height:13.0px;background:#b9e4fa"></div>
<div class="r" style="left:1078.00px;top:825px;width:77.0px;height:13.0px;background:#b9e4fa"></div>
<div class="r" style="left:1710.00px;top:825px;width:77.0px;height:13.0px;background:#b9e4fa"></div>
<div class="r" style="left:1315.00px;top:825px;width:77.0px;height:13.0px;background:linear-gradient(#f1f3f4,#bde3f8)"></div>
<div class="r" style="left:1473.00px;top:825px;width:77.0px;height:13.0px;background:linear-gradient(#f1f3f4,#bde3f8)"></div>
<div class="r" style="left:1552.00px;top:825px;width:77.0px;height:13.0px;background:linear-gradient(#f1f3f4,#bde3f8)"></div>
<div class="t" style="left:293.00px;top:825px">New</div>
<div class="t rt" style="left:367.00px;top:825px;width:72.70px">260,000</div>
<div class="t rt" style="left:604.00px;top:825px;width:72.70px">260,000</div>
<div class="t" style="left:684.80px;top:825px">Jaxson May</div>
<div class="t" style="left:767.00px;top:825px">Enterprise</div>
<div class="t rt" style="left:841.00px;top:825px;width:75.70px">Sep-19-2022</div>
<div class="t rt" style="left:920.00px;top:825px;width:75.70px">Oct-1-2022</div>
<div class="t rt" style="left:999.00px;top:825px;width:75.70px">Sep-30-2023</div>
<div class="t" style="left:1317.40px;top:825px">Y</div>
<svg class="r" style="left:1325.40px;top:830.30px" width="4" height="3" viewBox="0 0 4 3"><polygon points="0,0 3.6,0 1.8,3" fill="#3a3a3a"/></svg>
<div class="t rt" style="left:1394.00px;top:825px;width:75.80px">Sep-30-2032</div>
<div class="r" style="left:0.00px;top:835.00px;width:1790.00px;height:26.00px;background:#efefef;border-top:1px solid #c9c9c9"></div>
<div class="r" style="left:0.00px;top:861.00px;width:1790.00px;height:7.00px;background:#e2e2e2;border-top:1px solid #b5b5b5"></div>
<div class="r" style="left:15px;top:844px;width:0;height:0;border-top:5px solid transparent;border-bottom:5px solid transparent;border-right:7px solid #c2c2c2"></div>
<div class="r" style="left:38px;top:844px;width:0;height:0;border-top:5px solid transparent;border-bottom:5px solid transparent;border-left:7px solid #c2c2c2"></div>
<div class="r" style="left:61px;top:835px;width:92px;height:22px;background:#fff;border-radius:0 0 3px 3px;box-shadow:0 1px 2px rgba(0,0,0,.35)"></div>
<svg class="r" style="left:79px;top:841.5px" width="10" height="11" viewBox="0 0 10 11"><path d="M2.3 5 V3.5 A2.7 2.7 0 0 1 7.7 3.5 V5" fill="none" stroke="#5a5a5a" stroke-width="1.5"/><rect x="0.8" y="4.8" width="8.4" height="6" rx="0.8" fill="#5a5a5a"/></svg>
<div class="r" style="left:94.5px;top:839.5px;font-size:12.2px;line-height:16px;font-weight:bold;color:#23945a;white-space:nowrap">Details</div>
<div class="r" style="left:157.00px;top:838.00px;width:94.00px;height:20.00px;background:#d6d6d6;"></div>
<svg class="r" style="left:168px;top:841.5px" width="10" height="11" viewBox="0 0 10 11"><path d="M2.3 5 V3.5 A2.7 2.7 0 0 1 7.7 3.5 V5" fill="none" stroke="#5a5a5a" stroke-width="1.5"/><rect x="0.8" y="4.8" width="8.4" height="6" rx="0.8" fill="#5a5a5a"/></svg>
<div class="r" style="left:185px;top:839.5px;font-size:12.2px;line-height:16px;color:#1e1e1e;-webkit-text-stroke:.35px #1e1e1e;white-space:nowrap">Summary</div>
<div class="r" style="left:254.00px;top:838.00px;width:1.00px;height:20.00px;background:#cfcfcf;"></div>
<div class="r" style="left:269.00px;top:847.00px;width:10.00px;height:1.80px;background:#4a4a4a;"></div>
<div class="r" style="left:273.10px;top:843.00px;width:1.80px;height:10.00px;background:#4a4a4a;"></div>
<div class="r" style="left:292.00px;top:838.00px;width:1.00px;height:20.00px;background:#cfcfcf;"></div>
<div class="r" style="left:1601.00px;top:862.00px;width:37.00px;height:6.00px;background:#a9a9a9;"></div>
<div class="r" style="left:1613px;top:866px;width:13px;height:8px;border:1.3px solid #fff"></div>
<div class="r" style="left:1617.00px;top:866.00px;width:1.30px;height:4.00px;background:#fff;"></div>
<div class="r" style="left:1621.00px;top:866.00px;width:1.30px;height:4.00px;background:#fff;"></div>
<div class="r" style="left:1649px;top:866px;width:13px;height:8px;border:1.3px solid #8a8a8a"></div>
<div class="r" style="left:1684.5px;top:866px;width:13.5px;height:8px;border:1.3px solid #8a8a8a"></div>
<div class="r" style="left:1689.00px;top:866.00px;width:1.30px;height:4.00px;background:#8a8a8a;"></div>
<div class="r" style="left:1693.00px;top:866.00px;width:1.30px;height:4.00px;background:#8a8a8a;"></div>
<div class="r" style="left:1774px;top:864px;width:14px;height:14px;border-radius:7px;background:#fff"></div>
</body></html>
